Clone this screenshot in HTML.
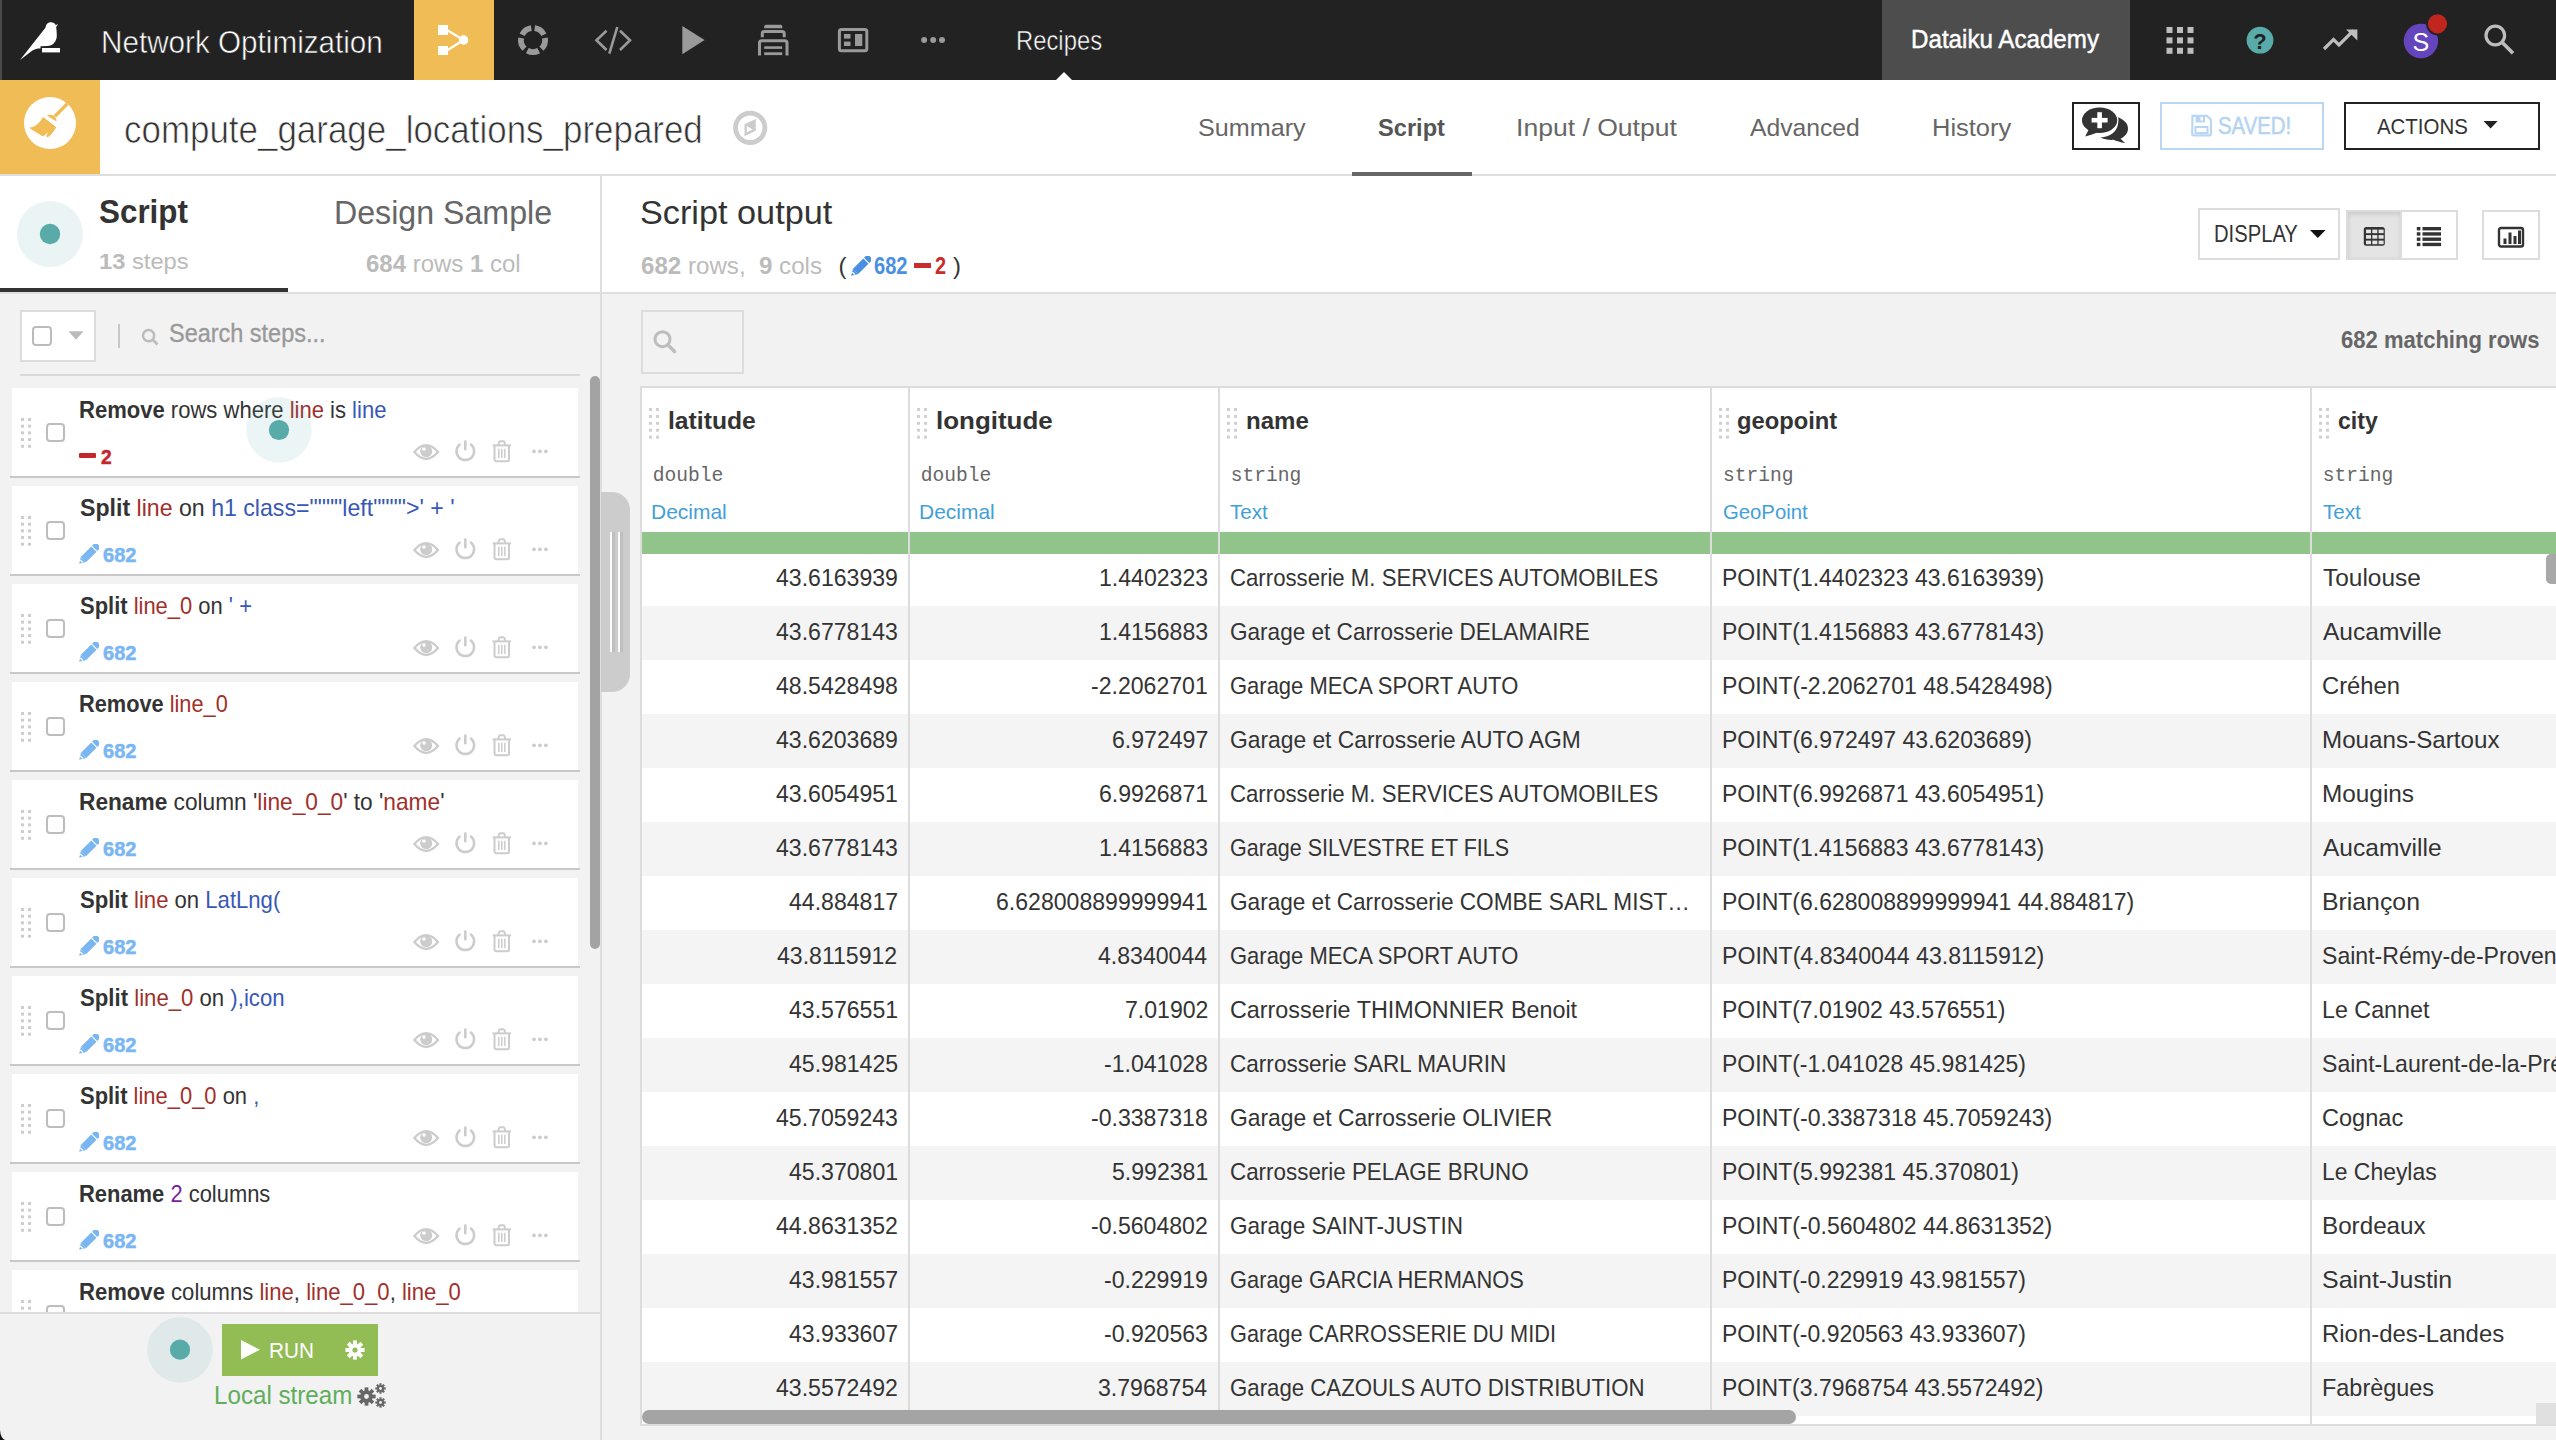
<!DOCTYPE html>
<html><head><meta charset="utf-8"><title>Dataiku</title><style>
html,body{margin:0;padding:0;width:2556px;height:1440px;overflow:hidden;background:#fff}
.m html,.m body{}
.r{position:absolute}
.t{position:absolute;line-height:1;white-space:nowrap}
.t b{font-weight:bold}
.rd{color:#a12f2b}
.bl{color:#3758b5}
.pu{color:#7a1fa0}
</style></head><body>
<div class="r" style="left:0.0px;top:0.0px;width:2556.0px;height:80.0px;background:#222222;"></div>
<div class="r" style="left:0.0px;top:0.0px;width:2.0px;height:80.0px;background:#4a4a4a;"></div>
<svg class="r" style="left:0.0px;top:0.0px;" width="80" height="80" viewBox="0 0 80 80"><path fill="#fff" d="M20,60 L45.6,27.5 C45.8,24 48.3,22.3 51,22.3 C53.3,22.3 54.8,23.4 55.7,24.9 L58.2,24.2 L56.1,26.9 C56.6,29.5 56.8,32.5 56.8,36 C56.5,42 52.5,46 47.3,46 L40.5,46.3 L40.5,48.4 C37,48.4 34.5,49 32.4,50.5 Z"/><rect x="42" y="48" width="18" height="4.4" fill="#fff"/></svg>
<div id="t0" class="t" style="left:101.11px;top:25.8px;font-family:'Liberation Sans', sans-serif;font-size:32.0px;color:#fff;font-weight:normal;transform:scaleX(0.9269);transform-origin:0 0;-webkit-text-stroke:0.6px #222;">Network Optimization</div>
<div class="r" style="left:414.0px;top:0.0px;width:80.0px;height:80.0px;background:#F0BC55;"></div>
<svg class="r" style="left:414.0px;top:0.0px;" width="80" height="80" viewBox="0 0 80 80"><rect x="24" y="25" width="10" height="10" fill="#fff"/><rect x="24" y="46" width="10" height="9" fill="#fff"/><path d="M33,30 L49.6,40 L33,50.5" stroke="#fff" stroke-width="2.2" fill="none"/><circle cx="49.6" cy="40" r="4.7" fill="#fff"/></svg>
<svg class="r" style="left:493.0px;top:0.0px;" width="80" height="80" viewBox="0 0 80 80"><path fill="#9a9a9a" d="M42.09,25.15 A15,15 0 0 1 53.48,33.42 L48.27,35.97 A9.2,9.2 0 0 0 41.28,30.89 Z"/><path fill="#9a9a9a" d="M54.77,37.40 A15,15 0 0 1 50.42,50.79 L46.39,46.62 A9.2,9.2 0 0 0 49.06,38.40 Z"/><path fill="#9a9a9a" d="M47.04,53.24 A15,15 0 0 1 32.96,53.24 L35.68,48.12 A9.2,9.2 0 0 0 44.32,48.12 Z"/><path fill="#9a9a9a" d="M29.58,50.79 A15,15 0 0 1 25.23,37.40 L30.94,38.40 A9.2,9.2 0 0 0 33.61,46.62 Z"/><path fill="#9a9a9a" d="M26.52,33.42 A15,15 0 0 1 37.91,25.15 L38.72,30.89 A9.2,9.2 0 0 0 31.73,35.97 Z"/></svg>
<svg class="r" style="left:573.0px;top:0.0px;" width="80" height="80" viewBox="0 0 80 80"><path d="M33.5,30.7 L23.5,40.3 L33.5,50" stroke="#9a9a9a" stroke-width="2.6" fill="none"/><path d="M47,30.7 L57,40.3 L47,50" stroke="#9a9a9a" stroke-width="2.6" fill="none"/><path d="M44.3,27 L36.3,53.7" stroke="#9a9a9a" stroke-width="2.6" fill="none"/></svg>
<svg class="r" style="left:653.0px;top:0.0px;" width="80" height="80" viewBox="0 0 80 80"><path d="M29.3,25.9 L29.3,54.2 L51.6,40 Z" fill="#9a9a9a"/></svg>
<svg class="r" style="left:733.0px;top:0.0px;" width="80" height="80" viewBox="0 0 80 80"><path d="M31.2,28.2 L31.2,26.5 Q31.2,24.7 33,24.7 L47.5,24.7 Q49.3,24.7 49.3,26.5 L49.3,28.2 Z" fill="#9a9a9a"/><path d="M29.3,37.2 L29.3,33.5 Q29.3,31.5 31.5,31.5 L49,31.5 Q51.2,31.5 51.2,33.5 L51.2,37.2" stroke="#9a9a9a" stroke-width="3" fill="none"/><path d="M26.5,55.4 L26.5,43 Q26.5,40.8 28.8,40.8 L51.8,40.8 Q54,40.8 54,43 L54,55.4" stroke="#9a9a9a" stroke-width="3" fill="none"/><rect x="31.2" y="46.3" width="18" height="2.6" fill="#9a9a9a"/><rect x="31.2" y="52.3" width="18" height="2.8" fill="#9a9a9a"/></svg>
<svg class="r" style="left:813.0px;top:0.0px;" width="80" height="80" viewBox="0 0 80 80"><rect x="26.4" y="29.4" width="27.4" height="21.3" rx="2" stroke="#9a9a9a" stroke-width="3" fill="none"/><rect x="31" y="34" width="6.5" height="4.6" fill="#9a9a9a"/><rect x="31" y="41.6" width="6.5" height="4.4" fill="#9a9a9a"/><rect x="42" y="34" width="7.3" height="12" fill="#9a9a9a"/></svg>
<svg class="r" style="left:893.0px;top:0.0px;" width="80" height="80" viewBox="0 0 80 80"><circle cx="31.1" cy="40" r="3" fill="#9a9a9a"/><circle cx="40.2" cy="40" r="3" fill="#9a9a9a"/><circle cx="49" cy="40" r="3" fill="#9a9a9a"/></svg>
<div id="t1" class="t" style="left:1016.13px;top:27.4px;font-family:'Liberation Sans', sans-serif;font-size:27.4px;color:#fff;font-weight:normal;transform:scaleX(0.8694);transform-origin:0 0;-webkit-text-stroke:0.5px #222;">Recipes</div>
<svg class="r" style="left:1054.0px;top:71.0px;" width="20" height="9" viewBox="0 0 20 9"><path d="M2,9 L10,1 L18,9 Z" fill="#fff"/></svg>
<div class="r" style="left:1882.0px;top:0.0px;width:248.0px;height:80.0px;background:#4d4d4d;"></div>
<div id="t2" class="t" style="left:1911.19px;top:26.0px;font-family:'Liberation Sans', sans-serif;font-size:26.7px;color:#fff;font-weight:normal;transform:scaleX(0.9053);transform-origin:0 0;-webkit-text-stroke:0.5px #fff;">Dataiku Academy</div>
<svg class="r" style="left:2140.0px;top:0.0px;" width="80" height="80" viewBox="0 0 80 80"><rect x="26.5" y="27.0" width="6" height="6" fill="#bdbdbd"/><rect x="37.0" y="27.0" width="6" height="6" fill="#bdbdbd"/><rect x="47.5" y="27.0" width="6" height="6" fill="#bdbdbd"/><rect x="26.5" y="37.4" width="6" height="6" fill="#bdbdbd"/><rect x="37.0" y="37.4" width="6" height="6" fill="#bdbdbd"/><rect x="47.5" y="37.4" width="6" height="6" fill="#bdbdbd"/><rect x="26.5" y="47.8" width="6" height="6" fill="#bdbdbd"/><rect x="37.0" y="47.8" width="6" height="6" fill="#bdbdbd"/><rect x="47.5" y="47.8" width="6" height="6" fill="#bdbdbd"/></svg>
<svg class="r" style="left:2220.0px;top:0.0px;" width="80" height="80" viewBox="0 0 80 80"><circle cx="40" cy="40.2" r="13.4" fill="#58ABA9"/><text x="40" y="48.5" text-anchor="middle" font-family="Liberation Sans" font-weight="bold" font-size="22" fill="#222">?</text></svg>
<svg class="r" style="left:2300.0px;top:0.0px;" width="80" height="80" viewBox="0 0 80 80"><path d="M24,49 L33.5,39.5 L39,45 L53.5,30.5" stroke="#bdbdbd" stroke-width="3.2" fill="none"/><path d="M46,29.5 L57.4,29.5 L57.4,40.5 Z" fill="#bdbdbd"/></svg>
<svg class="r" style="left:2380.0px;top:0.0px;" width="80" height="80" viewBox="0 0 80 80"><circle cx="40.9" cy="41" r="17.2" fill="#6445BE"/><text x="40.9" y="50.5" text-anchor="middle" font-family="Liberation Sans" font-size="25" fill="#fff">S</text><circle cx="57.5" cy="23.8" r="11.5" fill="#222"/><circle cx="57.5" cy="23.8" r="9.6" fill="#C0261E"/></svg>
<svg class="r" style="left:2460.0px;top:0.0px;" width="80" height="80" viewBox="0 0 80 80"><circle cx="35.3" cy="35.5" r="9.3" stroke="#bdbdbd" stroke-width="3.2" fill="none"/><path d="M41.8,42 L53,53.3" stroke="#bdbdbd" stroke-width="3.6" fill="none"/></svg>
<div class="r" style="left:0.0px;top:80.0px;width:2556.0px;height:94.0px;background:#ffffff;"></div>
<div class="r" style="left:0.0px;top:174.0px;width:2556.0px;height:2.0px;background:#dedede;"></div>
<div class="r" style="left:0.0px;top:80.0px;width:100.0px;height:94.0px;background:#F0BC55;"></div>
<svg class="r" style="left:0.0px;top:80.0px;" width="100" height="94" viewBox="0 0 100 94"><circle cx="50" cy="43" r="26" fill="#fff"/><g fill="#F0BC55"><path d="M66.2,22.5 L68.6,24.8 L56.2,37.4 L53.8,35 Z"/><path d="M46.8,35.5 C48.5,34.6 51.2,34.2 53.5,35.6 C55.3,36.8 56.2,38.4 56.6,40.8 L56.5,41.6 Z"/><path d="M43.2,37 L56.2,47.2 C54.8,50 52.4,53.5 47.7,57.5 L46.3,56.3 L47.6,52.6 L43.2,56.4 C39.6,54.8 34.5,51.5 29.2,47.8 C33.8,47.5 37.2,45 40,41.6 Z"/></g></svg>
<div id="t3" class="t" style="left:124.10px;top:110.0px;font-family:'Liberation Sans', sans-serif;font-size:39.0px;color:#333;font-weight:normal;transform:scaleX(0.8958);transform-origin:0 0;-webkit-text-stroke:0.7px #fff;">compute_garage_locations_prepared</div>
<svg class="r" style="left:730.0px;top:108.0px;" width="40" height="40" viewBox="0 0 40 40"><circle cx="20.2" cy="19.8" r="14.7" stroke="#cccccc" stroke-width="4.8" fill="none"/><path fill="#ccc" fill-rule="evenodd" d="M14.5,16.3 L25.8,11 L25.8,22.7 L14.5,28.2 Z M16.8,18 L22.7,21.4 L16.8,24.3 Z"/></svg>
<div id="t4" class="t" style="left:1197.58px;top:115.6px;font-family:'Liberation Sans', sans-serif;font-size:24.6px;color:#666;font-weight:normal;transform:scaleX(1.0229);transform-origin:0 0;">Summary</div>
<div id="t5" class="t" style="left:1377.61px;top:115.6px;font-family:'Liberation Sans', sans-serif;font-size:24.6px;color:#555;font-weight:bold;transform:scaleX(0.9600);transform-origin:0 0;">Script</div>
<div id="t6" class="t" style="left:1516.28px;top:115.6px;font-family:'Liberation Sans', sans-serif;font-size:24.6px;color:#666;font-weight:normal;transform:scaleX(1.0797);transform-origin:0 0;">Input / Output</div>
<div id="t7" class="t" style="left:1750.00px;top:115.6px;font-family:'Liberation Sans', sans-serif;font-size:24.6px;color:#666;font-weight:normal;transform:scaleX(1.0037);transform-origin:0 0;">Advanced</div>
<div id="t8" class="t" style="left:1931.55px;top:115.6px;font-family:'Liberation Sans', sans-serif;font-size:24.6px;color:#666;font-weight:normal;transform:scaleX(1.0355);transform-origin:0 0;">History</div>
<div class="r" style="left:1352.0px;top:172.0px;width:120.0px;height:4.0px;background:#666666;"></div>
<div class="r" style="left:2072.0px;top:102.0px;width:68.0px;height:48.0px;background:#fff;box-sizing:border-box;border:2px solid #222;"></div>
<svg class="r" style="left:2072.0px;top:102.0px;" width="68" height="48" viewBox="0 0 68 48"><path fill="#333" d="M43.5,14.5 C51,16.5 56,21 56,26.5 C56,31 53,34.5 48.5,36.8 L53,41 C48.5,40.5 44.5,39 41.5,37.8 C37.5,38.3 32,37.3 28.5,35.5 C38,35 45,29.5 46,22 C46.3,19.5 45.5,16.8 43.5,14.5 Z"/><ellipse cx="27.6" cy="18.2" rx="17.6" ry="12.8" fill="#333" stroke="#fff" stroke-width="2.6"/><ellipse cx="27.6" cy="18.2" rx="17.6" ry="12.8" fill="#333"/><path fill="#333" d="M17,27 L13.2,34.4 C18,33.4 22,31.8 25.5,30.2 Z"/><rect x="25.3" y="10.2" width="4.6" height="16" fill="#fff"/><rect x="19.6" y="15.9" width="16" height="4.6" fill="#fff"/></svg>
<div class="r" style="left:2160.0px;top:102.0px;width:163.5px;height:47.5px;background:#fff;box-sizing:border-box;border:2px solid #b9d7f3;"></div>
<svg class="r" style="left:2190.0px;top:114.0px;" width="24" height="24" viewBox="0 0 24 24"><path d="M2.5,1.8 L17,1.8 L21,5.8 L21,19.8 Q21,21.4 19.4,21.4 L3.8,21.4 Q2.2,21.4 2.2,19.8 Z" stroke="#b9d7f3" stroke-width="2.2" fill="none"/><rect x="5.5" y="2" width="9.5" height="6.5" fill="#b9d7f3"/><rect x="10.5" y="3" width="2.5" height="3.5" fill="#fff"/><rect x="5.5" y="13" width="12" height="6" stroke="#b9d7f3" stroke-width="2" fill="none"/></svg>
<div id="t9" class="t" style="left:2218.06px;top:114.6px;font-family:'Liberation Sans', sans-serif;font-size:23.2px;color:#b3d3f2;font-weight:normal;transform:scaleX(0.8790);transform-origin:0 0;-webkit-text-stroke:0.5px #b3d3f2;">SAVED!</div>
<div class="r" style="left:2343.5px;top:102.0px;width:196.0px;height:47.5px;background:#fff;box-sizing:border-box;border:2px solid #222;"></div>
<div id="t10" class="t" style="left:2376.95px;top:114.8px;font-family:'Liberation Sans', sans-serif;font-size:22.8px;color:#333;font-weight:normal;transform:scaleX(0.8960);transform-origin:0 0;">ACTIONS</div>
<svg class="r" style="left:2482.0px;top:118.0px;" width="18" height="12" viewBox="0 0 18 12"><path d="M1.5,3 L15.7,3 L8.6,10.5 Z" fill="#222"/></svg>
<div class="r" style="left:0.0px;top:176.0px;width:600.0px;height:116.0px;background:#fff;"></div>
<div class="r" style="left:0.0px;top:292.0px;width:600.0px;height:2.0px;background:#dedede;"></div>
<div class="r" style="left:0.0px;top:288.0px;width:288.0px;height:4.0px;background:#333333;"></div>
<div class="r" style="left:600.0px;top:176.0px;width:2.0px;height:1264.0px;background:#dedede;"></div>
<svg class="r" style="left:12.0px;top:196.0px;" width="76" height="76" viewBox="0 0 76 76"><circle cx="38" cy="38" r="33" fill="#eaf4f4"/><circle cx="38" cy="38" r="10.2" fill="#58ABA9"/></svg>
<div id="t11" class="t" style="left:98.83px;top:194.5px;font-family:'Liberation Sans', sans-serif;font-size:33.3px;color:#333;font-weight:bold;transform:scaleX(0.9426);transform-origin:0 0;">Script</div>
<div id="t12" class="t" style="left:98.97px;top:251.0px;font-family:'Liberation Sans', sans-serif;font-size:22.5px;color:#bbbbbb;font-weight:normal;transform:scaleX(1.0536);transform-origin:0 0;"><b>13</b> steps</div>
<div id="t13" class="t" style="left:334.28px;top:195.5px;font-family:'Liberation Sans', sans-serif;font-size:33.3px;color:#666;font-weight:normal;transform:scaleX(0.9658);transform-origin:0 0;">Design Sample</div>
<div id="t14" class="t" style="left:366.37px;top:253.0px;font-family:'Liberation Sans', sans-serif;font-size:23.0px;color:#bbbbbb;font-weight:normal;transform:scaleX(1.0429);transform-origin:0 0;"><b>684</b> rows <b>1</b> col</div>
<div class="r" style="left:0.0px;top:294.0px;width:600.0px;height:1146.0px;background:#f2f2f2;"></div>
<div class="r" style="left:20.0px;top:310.0px;width:75.5px;height:51.5px;background:#fff;box-sizing:border-box;border:2px solid #dcdcdc;"></div>
<div class="r" style="left:32.0px;top:326.0px;width:20.0px;height:19.5px;background:transparent;box-sizing:border-box;border:2px solid #bbb;border-radius:4px;"></div>
<svg class="r" style="left:66.0px;top:328.0px;" width="20" height="14" viewBox="0 0 20 14"><path d="M2.5,3.2 L17.5,3.2 L10,11.8 Z" fill="#bbb"/></svg>
<div class="r" style="left:117.5px;top:324.0px;width:2.0px;height:23.5px;background:#c8c8c8;"></div>
<svg class="r" style="left:138.0px;top:325.0px;" width="24" height="24" viewBox="0 0 24 24"><circle cx="10.6" cy="10.6" r="5.6" stroke="#bbb" stroke-width="2.4" fill="none"/><path d="M14.6,14.6 L19.5,19.5" stroke="#bbb" stroke-width="2.8"/></svg>
<div id="t15" class="t" style="left:169.08px;top:320.7px;font-family:'Liberation Sans', sans-serif;font-size:25.6px;color:#999999;font-weight:normal;transform:scaleX(0.9167);transform-origin:0 0;-webkit-text-stroke:0.35px #999;">Search steps...</div>
<div class="r" style="left:20.0px;top:374.0px;width:560.0px;height:2.0px;background:#d8d8d8;"></div>
<div class="r" style="left:0;top:376px;width:600px;height:936px;overflow:hidden">
<div class="r" style="left:12.0px;top:12.0px;width:566.0px;height:88.0px;background:#fff;"></div>
<div class="r" style="left:10.0px;top:100.0px;width:570.0px;height:2.0px;background:#c8c8c8;"></div>
<svg class="r" style="left:21.0px;top:41.6px;" width="10" height="30" viewBox="0 0 10 30"><rect x="0" y="0" width="3" height="3" fill="#cdcdcd"/><rect x="7" y="0" width="3" height="3" fill="#cdcdcd"/><rect x="0" y="6.68" width="3" height="3" fill="#cdcdcd"/><rect x="7" y="6.68" width="3" height="3" fill="#cdcdcd"/><rect x="0" y="13.36" width="3" height="3" fill="#cdcdcd"/><rect x="7" y="13.36" width="3" height="3" fill="#cdcdcd"/><rect x="0" y="20.04" width="3" height="3" fill="#cdcdcd"/><rect x="7" y="20.04" width="3" height="3" fill="#cdcdcd"/><rect x="0" y="26.72" width="3" height="3" fill="#cdcdcd"/><rect x="7" y="26.72" width="3" height="3" fill="#cdcdcd"/></svg>
<div class="r" style="left:46.0px;top:47.2px;width:18.6px;height:18.6px;background:transparent;box-sizing:border-box;border:2px solid #bdbdbd;border-radius:4px;"></div>
<div id="t16" class="t" style="left:79.05px;top:23.0px;font-family:'Liberation Sans', sans-serif;font-size:23.2px;color:#333;font-weight:normal;transform:scaleX(0.9503);transform-origin:0 0;"><b>Remove</b> rows where <span class="rd">line</span> is <span class="bl">line</span></div>
<div class="r" style="left:79.0px;top:77.1px;width:16.8px;height:4.8px;background:#c4262c;border-radius:1px;"></div>
<div id="t17" class="t" style="left:100.80px;top:70.9px;font-family:'Liberation Sans', sans-serif;font-size:20.9px;color:#c4262c;font-weight:bold;transform:scaleX(0.9182);transform-origin:0 0;-webkit-text-stroke:0.5px #c4262c;">2</div>
<svg class="r" style="left:410.0px;top:60.0px;" width="140" height="28" viewBox="0 0 140 28"><path d="M4.4,16.1 Q16.2,2.3 28,16.1 Q16.2,29.9 4.4,16.1 Z" stroke="#cccccc" stroke-width="2.3" fill="none"/><circle cx="16.2" cy="15.3" r="6" fill="#ccc"/><circle cx="14" cy="13" r="1.8" fill="#fff"/><path d="M49.64,8.56 A8.8,8.8 0 1 0 60.96,8.56" stroke="#ccc" stroke-width="2.5" fill="none" stroke-linecap="round"/><path d="M55.3,5.6 L55.3,13.2" stroke="#ccc" stroke-width="2.6" stroke-linecap="round"/><path d="M84.5,9.4 L84.5,23.8 Q84.5,25.2 86,25.2 L97.5,25.2 Q99,25.2 99,23.8 L99,9.4" stroke="#ccc" stroke-width="2" fill="none"/><path d="M82.6,9.4 L101,9.4" stroke="#ccc" stroke-width="2"/><path d="M88.2,9.4 L89,6.2 Q89.3,5.2 90.4,5.2 L93.2,5.2 Q94.2,5.2 94.5,6.2 L95.3,9.4" stroke="#ccc" stroke-width="2" fill="none"/><path d="M88.8,12.8 L88.8,22 M91.8,12.8 L91.8,22 M94.8,12.8 L94.8,22" stroke="#ccc" stroke-width="1.5"/><circle cx="124" cy="15.3" r="1.9" fill="#ccc"/><circle cx="129.9" cy="15.3" r="1.9" fill="#ccc"/><circle cx="135.9" cy="15.3" r="1.9" fill="#ccc"/></svg>
<div class="r" style="left:12.0px;top:110.0px;width:566.0px;height:88.0px;background:#fff;"></div>
<div class="r" style="left:10.0px;top:198.0px;width:570.0px;height:2.0px;background:#c8c8c8;"></div>
<svg class="r" style="left:21.0px;top:139.6px;" width="10" height="30" viewBox="0 0 10 30"><rect x="0" y="0" width="3" height="3" fill="#cdcdcd"/><rect x="7" y="0" width="3" height="3" fill="#cdcdcd"/><rect x="0" y="6.68" width="3" height="3" fill="#cdcdcd"/><rect x="7" y="6.68" width="3" height="3" fill="#cdcdcd"/><rect x="0" y="13.36" width="3" height="3" fill="#cdcdcd"/><rect x="7" y="13.36" width="3" height="3" fill="#cdcdcd"/><rect x="0" y="20.04" width="3" height="3" fill="#cdcdcd"/><rect x="7" y="20.04" width="3" height="3" fill="#cdcdcd"/><rect x="0" y="26.72" width="3" height="3" fill="#cdcdcd"/><rect x="7" y="26.72" width="3" height="3" fill="#cdcdcd"/></svg>
<div class="r" style="left:46.0px;top:145.2px;width:18.6px;height:18.6px;background:transparent;box-sizing:border-box;border:2px solid #bdbdbd;border-radius:4px;"></div>
<div id="t18" class="t" style="left:80.00px;top:121.0px;font-family:'Liberation Sans', sans-serif;font-size:23.2px;color:#333;font-weight:normal;transform:scaleX(0.9973);transform-origin:0 0;"><b>Split</b> <span class="rd">line</span> on <span class="bl">h1 class=""""left"""">' + '</span></div>
<svg class="r" style="left:78.0px;top:168.0px;" width="21" height="21" viewBox="0 0 21 21"><g transform="translate(1.2,19.8) rotate(-45)" fill="#7ab6f2"><path d="M0,0 L6.2,-3.7 L6.2,3.7 Z"/><rect x="6.2" y="-3.7" width="14.6" height="7.4"/><path d="M21.9,-3.7 L25.6,-3.7 Q27,-3.7 27,-2.3 L27,2.3 Q27,3.7 25.6,3.7 L21.9,3.7 Z"/></g><path d="M2.3,16 L4.8,18.5" stroke="#fff" stroke-width="1.2"/></svg>
<div id="t19" class="t" style="left:102.61px;top:168.6px;font-family:'Liberation Sans', sans-serif;font-size:20.9px;color:#7ab6f2;font-weight:bold;transform:scaleX(0.9600);transform-origin:0 0;-webkit-text-stroke:0.5px #7ab6f2;">682</div>
<svg class="r" style="left:410.0px;top:158.0px;" width="140" height="28" viewBox="0 0 140 28"><path d="M4.4,16.1 Q16.2,2.3 28,16.1 Q16.2,29.9 4.4,16.1 Z" stroke="#cccccc" stroke-width="2.3" fill="none"/><circle cx="16.2" cy="15.3" r="6" fill="#ccc"/><circle cx="14" cy="13" r="1.8" fill="#fff"/><path d="M49.64,8.56 A8.8,8.8 0 1 0 60.96,8.56" stroke="#ccc" stroke-width="2.5" fill="none" stroke-linecap="round"/><path d="M55.3,5.6 L55.3,13.2" stroke="#ccc" stroke-width="2.6" stroke-linecap="round"/><path d="M84.5,9.4 L84.5,23.8 Q84.5,25.2 86,25.2 L97.5,25.2 Q99,25.2 99,23.8 L99,9.4" stroke="#ccc" stroke-width="2" fill="none"/><path d="M82.6,9.4 L101,9.4" stroke="#ccc" stroke-width="2"/><path d="M88.2,9.4 L89,6.2 Q89.3,5.2 90.4,5.2 L93.2,5.2 Q94.2,5.2 94.5,6.2 L95.3,9.4" stroke="#ccc" stroke-width="2" fill="none"/><path d="M88.8,12.8 L88.8,22 M91.8,12.8 L91.8,22 M94.8,12.8 L94.8,22" stroke="#ccc" stroke-width="1.5"/><circle cx="124" cy="15.3" r="1.9" fill="#ccc"/><circle cx="129.9" cy="15.3" r="1.9" fill="#ccc"/><circle cx="135.9" cy="15.3" r="1.9" fill="#ccc"/></svg>
<div class="r" style="left:12.0px;top:208.0px;width:566.0px;height:88.0px;background:#fff;"></div>
<div class="r" style="left:10.0px;top:296.0px;width:570.0px;height:2.0px;background:#c8c8c8;"></div>
<svg class="r" style="left:21.0px;top:237.6px;" width="10" height="30" viewBox="0 0 10 30"><rect x="0" y="0" width="3" height="3" fill="#cdcdcd"/><rect x="7" y="0" width="3" height="3" fill="#cdcdcd"/><rect x="0" y="6.68" width="3" height="3" fill="#cdcdcd"/><rect x="7" y="6.68" width="3" height="3" fill="#cdcdcd"/><rect x="0" y="13.36" width="3" height="3" fill="#cdcdcd"/><rect x="7" y="13.36" width="3" height="3" fill="#cdcdcd"/><rect x="0" y="20.04" width="3" height="3" fill="#cdcdcd"/><rect x="7" y="20.04" width="3" height="3" fill="#cdcdcd"/><rect x="0" y="26.72" width="3" height="3" fill="#cdcdcd"/><rect x="7" y="26.72" width="3" height="3" fill="#cdcdcd"/></svg>
<div class="r" style="left:46.0px;top:243.2px;width:18.6px;height:18.6px;background:transparent;box-sizing:border-box;border:2px solid #bdbdbd;border-radius:4px;"></div>
<div id="t20" class="t" style="left:80.00px;top:219.0px;font-family:'Liberation Sans', sans-serif;font-size:23.2px;color:#333;font-weight:normal;transform:scaleX(0.9464);transform-origin:0 0;"><b>Split</b> <span class="rd">line_0</span> on <span class="bl">' +</span></div>
<svg class="r" style="left:78.0px;top:266.0px;" width="21" height="21" viewBox="0 0 21 21"><g transform="translate(1.2,19.8) rotate(-45)" fill="#7ab6f2"><path d="M0,0 L6.2,-3.7 L6.2,3.7 Z"/><rect x="6.2" y="-3.7" width="14.6" height="7.4"/><path d="M21.9,-3.7 L25.6,-3.7 Q27,-3.7 27,-2.3 L27,2.3 Q27,3.7 25.6,3.7 L21.9,3.7 Z"/></g><path d="M2.3,16 L4.8,18.5" stroke="#fff" stroke-width="1.2"/></svg>
<div id="t21" class="t" style="left:102.61px;top:266.6px;font-family:'Liberation Sans', sans-serif;font-size:20.9px;color:#7ab6f2;font-weight:bold;transform:scaleX(0.9600);transform-origin:0 0;-webkit-text-stroke:0.5px #7ab6f2;">682</div>
<svg class="r" style="left:410.0px;top:256.0px;" width="140" height="28" viewBox="0 0 140 28"><path d="M4.4,16.1 Q16.2,2.3 28,16.1 Q16.2,29.9 4.4,16.1 Z" stroke="#cccccc" stroke-width="2.3" fill="none"/><circle cx="16.2" cy="15.3" r="6" fill="#ccc"/><circle cx="14" cy="13" r="1.8" fill="#fff"/><path d="M49.64,8.56 A8.8,8.8 0 1 0 60.96,8.56" stroke="#ccc" stroke-width="2.5" fill="none" stroke-linecap="round"/><path d="M55.3,5.6 L55.3,13.2" stroke="#ccc" stroke-width="2.6" stroke-linecap="round"/><path d="M84.5,9.4 L84.5,23.8 Q84.5,25.2 86,25.2 L97.5,25.2 Q99,25.2 99,23.8 L99,9.4" stroke="#ccc" stroke-width="2" fill="none"/><path d="M82.6,9.4 L101,9.4" stroke="#ccc" stroke-width="2"/><path d="M88.2,9.4 L89,6.2 Q89.3,5.2 90.4,5.2 L93.2,5.2 Q94.2,5.2 94.5,6.2 L95.3,9.4" stroke="#ccc" stroke-width="2" fill="none"/><path d="M88.8,12.8 L88.8,22 M91.8,12.8 L91.8,22 M94.8,12.8 L94.8,22" stroke="#ccc" stroke-width="1.5"/><circle cx="124" cy="15.3" r="1.9" fill="#ccc"/><circle cx="129.9" cy="15.3" r="1.9" fill="#ccc"/><circle cx="135.9" cy="15.3" r="1.9" fill="#ccc"/></svg>
<div class="r" style="left:12.0px;top:306.0px;width:566.0px;height:88.0px;background:#fff;"></div>
<div class="r" style="left:10.0px;top:394.0px;width:570.0px;height:2.0px;background:#c8c8c8;"></div>
<svg class="r" style="left:21.0px;top:335.6px;" width="10" height="30" viewBox="0 0 10 30"><rect x="0" y="0" width="3" height="3" fill="#cdcdcd"/><rect x="7" y="0" width="3" height="3" fill="#cdcdcd"/><rect x="0" y="6.68" width="3" height="3" fill="#cdcdcd"/><rect x="7" y="6.68" width="3" height="3" fill="#cdcdcd"/><rect x="0" y="13.36" width="3" height="3" fill="#cdcdcd"/><rect x="7" y="13.36" width="3" height="3" fill="#cdcdcd"/><rect x="0" y="20.04" width="3" height="3" fill="#cdcdcd"/><rect x="7" y="20.04" width="3" height="3" fill="#cdcdcd"/><rect x="0" y="26.72" width="3" height="3" fill="#cdcdcd"/><rect x="7" y="26.72" width="3" height="3" fill="#cdcdcd"/></svg>
<div class="r" style="left:46.0px;top:341.2px;width:18.6px;height:18.6px;background:transparent;box-sizing:border-box;border:2px solid #bdbdbd;border-radius:4px;"></div>
<div id="t22" class="t" style="left:79.06px;top:317.0px;font-family:'Liberation Sans', sans-serif;font-size:23.2px;color:#333;font-weight:normal;transform:scaleX(0.9382);transform-origin:0 0;"><b>Remove</b> <span class="rd">line_0</span></div>
<svg class="r" style="left:78.0px;top:364.0px;" width="21" height="21" viewBox="0 0 21 21"><g transform="translate(1.2,19.8) rotate(-45)" fill="#7ab6f2"><path d="M0,0 L6.2,-3.7 L6.2,3.7 Z"/><rect x="6.2" y="-3.7" width="14.6" height="7.4"/><path d="M21.9,-3.7 L25.6,-3.7 Q27,-3.7 27,-2.3 L27,2.3 Q27,3.7 25.6,3.7 L21.9,3.7 Z"/></g><path d="M2.3,16 L4.8,18.5" stroke="#fff" stroke-width="1.2"/></svg>
<div id="t23" class="t" style="left:102.61px;top:364.6px;font-family:'Liberation Sans', sans-serif;font-size:20.9px;color:#7ab6f2;font-weight:bold;transform:scaleX(0.9600);transform-origin:0 0;-webkit-text-stroke:0.5px #7ab6f2;">682</div>
<svg class="r" style="left:410.0px;top:354.0px;" width="140" height="28" viewBox="0 0 140 28"><path d="M4.4,16.1 Q16.2,2.3 28,16.1 Q16.2,29.9 4.4,16.1 Z" stroke="#cccccc" stroke-width="2.3" fill="none"/><circle cx="16.2" cy="15.3" r="6" fill="#ccc"/><circle cx="14" cy="13" r="1.8" fill="#fff"/><path d="M49.64,8.56 A8.8,8.8 0 1 0 60.96,8.56" stroke="#ccc" stroke-width="2.5" fill="none" stroke-linecap="round"/><path d="M55.3,5.6 L55.3,13.2" stroke="#ccc" stroke-width="2.6" stroke-linecap="round"/><path d="M84.5,9.4 L84.5,23.8 Q84.5,25.2 86,25.2 L97.5,25.2 Q99,25.2 99,23.8 L99,9.4" stroke="#ccc" stroke-width="2" fill="none"/><path d="M82.6,9.4 L101,9.4" stroke="#ccc" stroke-width="2"/><path d="M88.2,9.4 L89,6.2 Q89.3,5.2 90.4,5.2 L93.2,5.2 Q94.2,5.2 94.5,6.2 L95.3,9.4" stroke="#ccc" stroke-width="2" fill="none"/><path d="M88.8,12.8 L88.8,22 M91.8,12.8 L91.8,22 M94.8,12.8 L94.8,22" stroke="#ccc" stroke-width="1.5"/><circle cx="124" cy="15.3" r="1.9" fill="#ccc"/><circle cx="129.9" cy="15.3" r="1.9" fill="#ccc"/><circle cx="135.9" cy="15.3" r="1.9" fill="#ccc"/></svg>
<div class="r" style="left:12.0px;top:404.0px;width:566.0px;height:88.0px;background:#fff;"></div>
<div class="r" style="left:10.0px;top:492.0px;width:570.0px;height:2.0px;background:#c8c8c8;"></div>
<svg class="r" style="left:21.0px;top:433.6px;" width="10" height="30" viewBox="0 0 10 30"><rect x="0" y="0" width="3" height="3" fill="#cdcdcd"/><rect x="7" y="0" width="3" height="3" fill="#cdcdcd"/><rect x="0" y="6.68" width="3" height="3" fill="#cdcdcd"/><rect x="7" y="6.68" width="3" height="3" fill="#cdcdcd"/><rect x="0" y="13.36" width="3" height="3" fill="#cdcdcd"/><rect x="7" y="13.36" width="3" height="3" fill="#cdcdcd"/><rect x="0" y="20.04" width="3" height="3" fill="#cdcdcd"/><rect x="7" y="20.04" width="3" height="3" fill="#cdcdcd"/><rect x="0" y="26.72" width="3" height="3" fill="#cdcdcd"/><rect x="7" y="26.72" width="3" height="3" fill="#cdcdcd"/></svg>
<div class="r" style="left:46.0px;top:439.2px;width:18.6px;height:18.6px;background:transparent;box-sizing:border-box;border:2px solid #bdbdbd;border-radius:4px;"></div>
<div id="t24" class="t" style="left:79.02px;top:415.0px;font-family:'Liberation Sans', sans-serif;font-size:23.2px;color:#333;font-weight:normal;transform:scaleX(0.9785);transform-origin:0 0;"><b>Rename</b> column '<span class="rd">line_0_0</span>' to '<span class="rd">name</span>'</div>
<svg class="r" style="left:78.0px;top:462.0px;" width="21" height="21" viewBox="0 0 21 21"><g transform="translate(1.2,19.8) rotate(-45)" fill="#7ab6f2"><path d="M0,0 L6.2,-3.7 L6.2,3.7 Z"/><rect x="6.2" y="-3.7" width="14.6" height="7.4"/><path d="M21.9,-3.7 L25.6,-3.7 Q27,-3.7 27,-2.3 L27,2.3 Q27,3.7 25.6,3.7 L21.9,3.7 Z"/></g><path d="M2.3,16 L4.8,18.5" stroke="#fff" stroke-width="1.2"/></svg>
<div id="t25" class="t" style="left:102.61px;top:462.6px;font-family:'Liberation Sans', sans-serif;font-size:20.9px;color:#7ab6f2;font-weight:bold;transform:scaleX(0.9600);transform-origin:0 0;-webkit-text-stroke:0.5px #7ab6f2;">682</div>
<svg class="r" style="left:410.0px;top:452.0px;" width="140" height="28" viewBox="0 0 140 28"><path d="M4.4,16.1 Q16.2,2.3 28,16.1 Q16.2,29.9 4.4,16.1 Z" stroke="#cccccc" stroke-width="2.3" fill="none"/><circle cx="16.2" cy="15.3" r="6" fill="#ccc"/><circle cx="14" cy="13" r="1.8" fill="#fff"/><path d="M49.64,8.56 A8.8,8.8 0 1 0 60.96,8.56" stroke="#ccc" stroke-width="2.5" fill="none" stroke-linecap="round"/><path d="M55.3,5.6 L55.3,13.2" stroke="#ccc" stroke-width="2.6" stroke-linecap="round"/><path d="M84.5,9.4 L84.5,23.8 Q84.5,25.2 86,25.2 L97.5,25.2 Q99,25.2 99,23.8 L99,9.4" stroke="#ccc" stroke-width="2" fill="none"/><path d="M82.6,9.4 L101,9.4" stroke="#ccc" stroke-width="2"/><path d="M88.2,9.4 L89,6.2 Q89.3,5.2 90.4,5.2 L93.2,5.2 Q94.2,5.2 94.5,6.2 L95.3,9.4" stroke="#ccc" stroke-width="2" fill="none"/><path d="M88.8,12.8 L88.8,22 M91.8,12.8 L91.8,22 M94.8,12.8 L94.8,22" stroke="#ccc" stroke-width="1.5"/><circle cx="124" cy="15.3" r="1.9" fill="#ccc"/><circle cx="129.9" cy="15.3" r="1.9" fill="#ccc"/><circle cx="135.9" cy="15.3" r="1.9" fill="#ccc"/></svg>
<div class="r" style="left:12.0px;top:502.0px;width:566.0px;height:88.0px;background:#fff;"></div>
<div class="r" style="left:10.0px;top:590.0px;width:570.0px;height:2.0px;background:#c8c8c8;"></div>
<svg class="r" style="left:21.0px;top:531.6px;" width="10" height="30" viewBox="0 0 10 30"><rect x="0" y="0" width="3" height="3" fill="#cdcdcd"/><rect x="7" y="0" width="3" height="3" fill="#cdcdcd"/><rect x="0" y="6.68" width="3" height="3" fill="#cdcdcd"/><rect x="7" y="6.68" width="3" height="3" fill="#cdcdcd"/><rect x="0" y="13.36" width="3" height="3" fill="#cdcdcd"/><rect x="7" y="13.36" width="3" height="3" fill="#cdcdcd"/><rect x="0" y="20.04" width="3" height="3" fill="#cdcdcd"/><rect x="7" y="20.04" width="3" height="3" fill="#cdcdcd"/><rect x="0" y="26.72" width="3" height="3" fill="#cdcdcd"/><rect x="7" y="26.72" width="3" height="3" fill="#cdcdcd"/></svg>
<div class="r" style="left:46.0px;top:537.2px;width:18.6px;height:18.6px;background:transparent;box-sizing:border-box;border:2px solid #bdbdbd;border-radius:4px;"></div>
<div id="t26" class="t" style="left:80.00px;top:513.0px;font-family:'Liberation Sans', sans-serif;font-size:23.2px;color:#333;font-weight:normal;transform:scaleX(0.9529);transform-origin:0 0;"><b>Split</b> <span class="rd">line</span> on <span class="bl">LatLng(</span></div>
<svg class="r" style="left:78.0px;top:560.0px;" width="21" height="21" viewBox="0 0 21 21"><g transform="translate(1.2,19.8) rotate(-45)" fill="#7ab6f2"><path d="M0,0 L6.2,-3.7 L6.2,3.7 Z"/><rect x="6.2" y="-3.7" width="14.6" height="7.4"/><path d="M21.9,-3.7 L25.6,-3.7 Q27,-3.7 27,-2.3 L27,2.3 Q27,3.7 25.6,3.7 L21.9,3.7 Z"/></g><path d="M2.3,16 L4.8,18.5" stroke="#fff" stroke-width="1.2"/></svg>
<div id="t27" class="t" style="left:102.61px;top:560.6px;font-family:'Liberation Sans', sans-serif;font-size:20.9px;color:#7ab6f2;font-weight:bold;transform:scaleX(0.9600);transform-origin:0 0;-webkit-text-stroke:0.5px #7ab6f2;">682</div>
<svg class="r" style="left:410.0px;top:550.0px;" width="140" height="28" viewBox="0 0 140 28"><path d="M4.4,16.1 Q16.2,2.3 28,16.1 Q16.2,29.9 4.4,16.1 Z" stroke="#cccccc" stroke-width="2.3" fill="none"/><circle cx="16.2" cy="15.3" r="6" fill="#ccc"/><circle cx="14" cy="13" r="1.8" fill="#fff"/><path d="M49.64,8.56 A8.8,8.8 0 1 0 60.96,8.56" stroke="#ccc" stroke-width="2.5" fill="none" stroke-linecap="round"/><path d="M55.3,5.6 L55.3,13.2" stroke="#ccc" stroke-width="2.6" stroke-linecap="round"/><path d="M84.5,9.4 L84.5,23.8 Q84.5,25.2 86,25.2 L97.5,25.2 Q99,25.2 99,23.8 L99,9.4" stroke="#ccc" stroke-width="2" fill="none"/><path d="M82.6,9.4 L101,9.4" stroke="#ccc" stroke-width="2"/><path d="M88.2,9.4 L89,6.2 Q89.3,5.2 90.4,5.2 L93.2,5.2 Q94.2,5.2 94.5,6.2 L95.3,9.4" stroke="#ccc" stroke-width="2" fill="none"/><path d="M88.8,12.8 L88.8,22 M91.8,12.8 L91.8,22 M94.8,12.8 L94.8,22" stroke="#ccc" stroke-width="1.5"/><circle cx="124" cy="15.3" r="1.9" fill="#ccc"/><circle cx="129.9" cy="15.3" r="1.9" fill="#ccc"/><circle cx="135.9" cy="15.3" r="1.9" fill="#ccc"/></svg>
<div class="r" style="left:12.0px;top:600.0px;width:566.0px;height:88.0px;background:#fff;"></div>
<div class="r" style="left:10.0px;top:688.0px;width:570.0px;height:2.0px;background:#c8c8c8;"></div>
<svg class="r" style="left:21.0px;top:629.6px;" width="10" height="30" viewBox="0 0 10 30"><rect x="0" y="0" width="3" height="3" fill="#cdcdcd"/><rect x="7" y="0" width="3" height="3" fill="#cdcdcd"/><rect x="0" y="6.68" width="3" height="3" fill="#cdcdcd"/><rect x="7" y="6.68" width="3" height="3" fill="#cdcdcd"/><rect x="0" y="13.36" width="3" height="3" fill="#cdcdcd"/><rect x="7" y="13.36" width="3" height="3" fill="#cdcdcd"/><rect x="0" y="20.04" width="3" height="3" fill="#cdcdcd"/><rect x="7" y="20.04" width="3" height="3" fill="#cdcdcd"/><rect x="0" y="26.72" width="3" height="3" fill="#cdcdcd"/><rect x="7" y="26.72" width="3" height="3" fill="#cdcdcd"/></svg>
<div class="r" style="left:46.0px;top:635.2px;width:18.6px;height:18.6px;background:transparent;box-sizing:border-box;border:2px solid #bdbdbd;border-radius:4px;"></div>
<div id="t28" class="t" style="left:80.00px;top:611.0px;font-family:'Liberation Sans', sans-serif;font-size:23.2px;color:#333;font-weight:normal;transform:scaleX(0.9559);transform-origin:0 0;"><b>Split</b> <span class="rd">line_0</span> on <span class="bl">),icon</span></div>
<svg class="r" style="left:78.0px;top:658.0px;" width="21" height="21" viewBox="0 0 21 21"><g transform="translate(1.2,19.8) rotate(-45)" fill="#7ab6f2"><path d="M0,0 L6.2,-3.7 L6.2,3.7 Z"/><rect x="6.2" y="-3.7" width="14.6" height="7.4"/><path d="M21.9,-3.7 L25.6,-3.7 Q27,-3.7 27,-2.3 L27,2.3 Q27,3.7 25.6,3.7 L21.9,3.7 Z"/></g><path d="M2.3,16 L4.8,18.5" stroke="#fff" stroke-width="1.2"/></svg>
<div id="t29" class="t" style="left:102.61px;top:658.6px;font-family:'Liberation Sans', sans-serif;font-size:20.9px;color:#7ab6f2;font-weight:bold;transform:scaleX(0.9600);transform-origin:0 0;-webkit-text-stroke:0.5px #7ab6f2;">682</div>
<svg class="r" style="left:410.0px;top:648.0px;" width="140" height="28" viewBox="0 0 140 28"><path d="M4.4,16.1 Q16.2,2.3 28,16.1 Q16.2,29.9 4.4,16.1 Z" stroke="#cccccc" stroke-width="2.3" fill="none"/><circle cx="16.2" cy="15.3" r="6" fill="#ccc"/><circle cx="14" cy="13" r="1.8" fill="#fff"/><path d="M49.64,8.56 A8.8,8.8 0 1 0 60.96,8.56" stroke="#ccc" stroke-width="2.5" fill="none" stroke-linecap="round"/><path d="M55.3,5.6 L55.3,13.2" stroke="#ccc" stroke-width="2.6" stroke-linecap="round"/><path d="M84.5,9.4 L84.5,23.8 Q84.5,25.2 86,25.2 L97.5,25.2 Q99,25.2 99,23.8 L99,9.4" stroke="#ccc" stroke-width="2" fill="none"/><path d="M82.6,9.4 L101,9.4" stroke="#ccc" stroke-width="2"/><path d="M88.2,9.4 L89,6.2 Q89.3,5.2 90.4,5.2 L93.2,5.2 Q94.2,5.2 94.5,6.2 L95.3,9.4" stroke="#ccc" stroke-width="2" fill="none"/><path d="M88.8,12.8 L88.8,22 M91.8,12.8 L91.8,22 M94.8,12.8 L94.8,22" stroke="#ccc" stroke-width="1.5"/><circle cx="124" cy="15.3" r="1.9" fill="#ccc"/><circle cx="129.9" cy="15.3" r="1.9" fill="#ccc"/><circle cx="135.9" cy="15.3" r="1.9" fill="#ccc"/></svg>
<div class="r" style="left:12.0px;top:698.0px;width:566.0px;height:88.0px;background:#fff;"></div>
<div class="r" style="left:10.0px;top:786.0px;width:570.0px;height:2.0px;background:#c8c8c8;"></div>
<svg class="r" style="left:21.0px;top:727.6px;" width="10" height="30" viewBox="0 0 10 30"><rect x="0" y="0" width="3" height="3" fill="#cdcdcd"/><rect x="7" y="0" width="3" height="3" fill="#cdcdcd"/><rect x="0" y="6.68" width="3" height="3" fill="#cdcdcd"/><rect x="7" y="6.68" width="3" height="3" fill="#cdcdcd"/><rect x="0" y="13.36" width="3" height="3" fill="#cdcdcd"/><rect x="7" y="13.36" width="3" height="3" fill="#cdcdcd"/><rect x="0" y="20.04" width="3" height="3" fill="#cdcdcd"/><rect x="7" y="20.04" width="3" height="3" fill="#cdcdcd"/><rect x="0" y="26.72" width="3" height="3" fill="#cdcdcd"/><rect x="7" y="26.72" width="3" height="3" fill="#cdcdcd"/></svg>
<div class="r" style="left:46.0px;top:733.2px;width:18.6px;height:18.6px;background:transparent;box-sizing:border-box;border:2px solid #bdbdbd;border-radius:4px;"></div>
<div id="t30" class="t" style="left:80.00px;top:709.0px;font-family:'Liberation Sans', sans-serif;font-size:23.2px;color:#333;font-weight:normal;transform:scaleX(0.9457);transform-origin:0 0;"><b>Split</b> <span class="rd">line_0_0</span> on <span class="bl">,</span></div>
<svg class="r" style="left:78.0px;top:756.0px;" width="21" height="21" viewBox="0 0 21 21"><g transform="translate(1.2,19.8) rotate(-45)" fill="#7ab6f2"><path d="M0,0 L6.2,-3.7 L6.2,3.7 Z"/><rect x="6.2" y="-3.7" width="14.6" height="7.4"/><path d="M21.9,-3.7 L25.6,-3.7 Q27,-3.7 27,-2.3 L27,2.3 Q27,3.7 25.6,3.7 L21.9,3.7 Z"/></g><path d="M2.3,16 L4.8,18.5" stroke="#fff" stroke-width="1.2"/></svg>
<div id="t31" class="t" style="left:102.61px;top:756.6px;font-family:'Liberation Sans', sans-serif;font-size:20.9px;color:#7ab6f2;font-weight:bold;transform:scaleX(0.9600);transform-origin:0 0;-webkit-text-stroke:0.5px #7ab6f2;">682</div>
<svg class="r" style="left:410.0px;top:746.0px;" width="140" height="28" viewBox="0 0 140 28"><path d="M4.4,16.1 Q16.2,2.3 28,16.1 Q16.2,29.9 4.4,16.1 Z" stroke="#cccccc" stroke-width="2.3" fill="none"/><circle cx="16.2" cy="15.3" r="6" fill="#ccc"/><circle cx="14" cy="13" r="1.8" fill="#fff"/><path d="M49.64,8.56 A8.8,8.8 0 1 0 60.96,8.56" stroke="#ccc" stroke-width="2.5" fill="none" stroke-linecap="round"/><path d="M55.3,5.6 L55.3,13.2" stroke="#ccc" stroke-width="2.6" stroke-linecap="round"/><path d="M84.5,9.4 L84.5,23.8 Q84.5,25.2 86,25.2 L97.5,25.2 Q99,25.2 99,23.8 L99,9.4" stroke="#ccc" stroke-width="2" fill="none"/><path d="M82.6,9.4 L101,9.4" stroke="#ccc" stroke-width="2"/><path d="M88.2,9.4 L89,6.2 Q89.3,5.2 90.4,5.2 L93.2,5.2 Q94.2,5.2 94.5,6.2 L95.3,9.4" stroke="#ccc" stroke-width="2" fill="none"/><path d="M88.8,12.8 L88.8,22 M91.8,12.8 L91.8,22 M94.8,12.8 L94.8,22" stroke="#ccc" stroke-width="1.5"/><circle cx="124" cy="15.3" r="1.9" fill="#ccc"/><circle cx="129.9" cy="15.3" r="1.9" fill="#ccc"/><circle cx="135.9" cy="15.3" r="1.9" fill="#ccc"/></svg>
<div class="r" style="left:12.0px;top:796.0px;width:566.0px;height:88.0px;background:#fff;"></div>
<div class="r" style="left:10.0px;top:884.0px;width:570.0px;height:2.0px;background:#c8c8c8;"></div>
<svg class="r" style="left:21.0px;top:825.6px;" width="10" height="30" viewBox="0 0 10 30"><rect x="0" y="0" width="3" height="3" fill="#cdcdcd"/><rect x="7" y="0" width="3" height="3" fill="#cdcdcd"/><rect x="0" y="6.68" width="3" height="3" fill="#cdcdcd"/><rect x="7" y="6.68" width="3" height="3" fill="#cdcdcd"/><rect x="0" y="13.36" width="3" height="3" fill="#cdcdcd"/><rect x="7" y="13.36" width="3" height="3" fill="#cdcdcd"/><rect x="0" y="20.04" width="3" height="3" fill="#cdcdcd"/><rect x="7" y="20.04" width="3" height="3" fill="#cdcdcd"/><rect x="0" y="26.72" width="3" height="3" fill="#cdcdcd"/><rect x="7" y="26.72" width="3" height="3" fill="#cdcdcd"/></svg>
<div class="r" style="left:46.0px;top:831.2px;width:18.6px;height:18.6px;background:transparent;box-sizing:border-box;border:2px solid #bdbdbd;border-radius:4px;"></div>
<div id="t32" class="t" style="left:79.05px;top:807.0px;font-family:'Liberation Sans', sans-serif;font-size:23.2px;color:#333;font-weight:normal;transform:scaleX(0.9453);transform-origin:0 0;"><b>Rename</b> <span class="pu">2</span> columns</div>
<svg class="r" style="left:78.0px;top:854.0px;" width="21" height="21" viewBox="0 0 21 21"><g transform="translate(1.2,19.8) rotate(-45)" fill="#7ab6f2"><path d="M0,0 L6.2,-3.7 L6.2,3.7 Z"/><rect x="6.2" y="-3.7" width="14.6" height="7.4"/><path d="M21.9,-3.7 L25.6,-3.7 Q27,-3.7 27,-2.3 L27,2.3 Q27,3.7 25.6,3.7 L21.9,3.7 Z"/></g><path d="M2.3,16 L4.8,18.5" stroke="#fff" stroke-width="1.2"/></svg>
<div id="t33" class="t" style="left:102.61px;top:854.6px;font-family:'Liberation Sans', sans-serif;font-size:20.9px;color:#7ab6f2;font-weight:bold;transform:scaleX(0.9600);transform-origin:0 0;-webkit-text-stroke:0.5px #7ab6f2;">682</div>
<svg class="r" style="left:410.0px;top:844.0px;" width="140" height="28" viewBox="0 0 140 28"><path d="M4.4,16.1 Q16.2,2.3 28,16.1 Q16.2,29.9 4.4,16.1 Z" stroke="#cccccc" stroke-width="2.3" fill="none"/><circle cx="16.2" cy="15.3" r="6" fill="#ccc"/><circle cx="14" cy="13" r="1.8" fill="#fff"/><path d="M49.64,8.56 A8.8,8.8 0 1 0 60.96,8.56" stroke="#ccc" stroke-width="2.5" fill="none" stroke-linecap="round"/><path d="M55.3,5.6 L55.3,13.2" stroke="#ccc" stroke-width="2.6" stroke-linecap="round"/><path d="M84.5,9.4 L84.5,23.8 Q84.5,25.2 86,25.2 L97.5,25.2 Q99,25.2 99,23.8 L99,9.4" stroke="#ccc" stroke-width="2" fill="none"/><path d="M82.6,9.4 L101,9.4" stroke="#ccc" stroke-width="2"/><path d="M88.2,9.4 L89,6.2 Q89.3,5.2 90.4,5.2 L93.2,5.2 Q94.2,5.2 94.5,6.2 L95.3,9.4" stroke="#ccc" stroke-width="2" fill="none"/><path d="M88.8,12.8 L88.8,22 M91.8,12.8 L91.8,22 M94.8,12.8 L94.8,22" stroke="#ccc" stroke-width="1.5"/><circle cx="124" cy="15.3" r="1.9" fill="#ccc"/><circle cx="129.9" cy="15.3" r="1.9" fill="#ccc"/><circle cx="135.9" cy="15.3" r="1.9" fill="#ccc"/></svg>
<div class="r" style="left:12.0px;top:894.0px;width:566.0px;height:88.0px;background:#fff;"></div>
<div class="r" style="left:10.0px;top:982.0px;width:570.0px;height:2.0px;background:#c8c8c8;"></div>
<svg class="r" style="left:21.0px;top:923.6px;" width="10" height="30" viewBox="0 0 10 30"><rect x="0" y="0" width="3" height="3" fill="#cdcdcd"/><rect x="7" y="0" width="3" height="3" fill="#cdcdcd"/><rect x="0" y="6.68" width="3" height="3" fill="#cdcdcd"/><rect x="7" y="6.68" width="3" height="3" fill="#cdcdcd"/><rect x="0" y="13.36" width="3" height="3" fill="#cdcdcd"/><rect x="7" y="13.36" width="3" height="3" fill="#cdcdcd"/><rect x="0" y="20.04" width="3" height="3" fill="#cdcdcd"/><rect x="7" y="20.04" width="3" height="3" fill="#cdcdcd"/><rect x="0" y="26.72" width="3" height="3" fill="#cdcdcd"/><rect x="7" y="26.72" width="3" height="3" fill="#cdcdcd"/></svg>
<div class="r" style="left:46.0px;top:929.2px;width:18.6px;height:18.6px;background:transparent;box-sizing:border-box;border:2px solid #bdbdbd;border-radius:4px;"></div>
<div id="t34" class="t" style="left:79.05px;top:905.0px;font-family:'Liberation Sans', sans-serif;font-size:23.2px;color:#333;font-weight:normal;transform:scaleX(0.9525);transform-origin:0 0;"><b>Remove</b> columns <span class="rd">line</span>, <span class="rd">line_0_0</span>, <span class="rd">line_0</span></div>
<svg class="r" style="left:78.0px;top:952.0px;" width="21" height="21" viewBox="0 0 21 21"><g transform="translate(1.2,19.8) rotate(-45)" fill="#7ab6f2"><path d="M0,0 L6.2,-3.7 L6.2,3.7 Z"/><rect x="6.2" y="-3.7" width="14.6" height="7.4"/><path d="M21.9,-3.7 L25.6,-3.7 Q27,-3.7 27,-2.3 L27,2.3 Q27,3.7 25.6,3.7 L21.9,3.7 Z"/></g><path d="M2.3,16 L4.8,18.5" stroke="#fff" stroke-width="1.2"/></svg>
<div id="t35" class="t" style="left:102.61px;top:952.6px;font-family:'Liberation Sans', sans-serif;font-size:20.9px;color:#7ab6f2;font-weight:bold;transform:scaleX(0.9600);transform-origin:0 0;-webkit-text-stroke:0.5px #7ab6f2;">682</div>
<svg class="r" style="left:410.0px;top:942.0px;" width="140" height="28" viewBox="0 0 140 28"><path d="M4.4,16.1 Q16.2,2.3 28,16.1 Q16.2,29.9 4.4,16.1 Z" stroke="#cccccc" stroke-width="2.3" fill="none"/><circle cx="16.2" cy="15.3" r="6" fill="#ccc"/><circle cx="14" cy="13" r="1.8" fill="#fff"/><path d="M49.64,8.56 A8.8,8.8 0 1 0 60.96,8.56" stroke="#ccc" stroke-width="2.5" fill="none" stroke-linecap="round"/><path d="M55.3,5.6 L55.3,13.2" stroke="#ccc" stroke-width="2.6" stroke-linecap="round"/><path d="M84.5,9.4 L84.5,23.8 Q84.5,25.2 86,25.2 L97.5,25.2 Q99,25.2 99,23.8 L99,9.4" stroke="#ccc" stroke-width="2" fill="none"/><path d="M82.6,9.4 L101,9.4" stroke="#ccc" stroke-width="2"/><path d="M88.2,9.4 L89,6.2 Q89.3,5.2 90.4,5.2 L93.2,5.2 Q94.2,5.2 94.5,6.2 L95.3,9.4" stroke="#ccc" stroke-width="2" fill="none"/><path d="M88.8,12.8 L88.8,22 M91.8,12.8 L91.8,22 M94.8,12.8 L94.8,22" stroke="#ccc" stroke-width="1.5"/><circle cx="124" cy="15.3" r="1.9" fill="#ccc"/><circle cx="129.9" cy="15.3" r="1.9" fill="#ccc"/><circle cx="135.9" cy="15.3" r="1.9" fill="#ccc"/></svg>
</div>
<div class="r" style="left:0.0px;top:1312.0px;width:600.0px;height:2.0px;background:#dcdcdc;"></div>
<div class="r" style="left:590.0px;top:376.0px;width:10.0px;height:573.0px;background:#a3a3a3;border-radius:5px;"></div>
<svg class="r" style="left:246.0px;top:397.0px;" width="66" height="66" viewBox="0 0 66 66"><circle cx="33" cy="33" r="32.7" fill="#58ABA9" fill-opacity="0.12"/><circle cx="33" cy="33" r="10.1" fill="#58ABA9"/></svg>
<svg class="r" style="left:146.0px;top:1316.0px;" width="68" height="68" viewBox="0 0 68 68"><circle cx="34" cy="34" r="32.7" fill="#58ABA9" fill-opacity="0.12"/><circle cx="34" cy="33.7" r="10.1" fill="#58ABA9"/></svg>
<div class="r" style="left:222.0px;top:1324.0px;width:155.6px;height:51.7px;background:#92BD55;"></div>
<svg class="r" style="left:236.0px;top:1335.0px;" width="30" height="30" viewBox="0 0 30 30"><path d="M5,5 L5,24.4 L24,14.7 Z" fill="#fff"/></svg>
<div id="t36" class="t" style="left:269.04px;top:1339.8px;font-family:'Liberation Sans', sans-serif;font-size:21.7px;color:#fff;font-weight:normal;transform:scaleX(0.9556);transform-origin:0 0;">RUN</div>
<svg class="r" style="left:342.0px;top:1337.0px;" width="26" height="26" viewBox="0 0 26 26"><g transform="translate(13,13)"><circle r="6.3" fill="#fff"/><circle r="2.6" fill="#92BD55"/><rect x="-2" y="-9.6" width="4" height="5" fill="#fff" transform="rotate(0)"/><rect x="-2" y="-9.6" width="4" height="5" fill="#fff" transform="rotate(45)"/><rect x="-2" y="-9.6" width="4" height="5" fill="#fff" transform="rotate(90)"/><rect x="-2" y="-9.6" width="4" height="5" fill="#fff" transform="rotate(135)"/><rect x="-2" y="-9.6" width="4" height="5" fill="#fff" transform="rotate(180)"/><rect x="-2" y="-9.6" width="4" height="5" fill="#fff" transform="rotate(225)"/><rect x="-2" y="-9.6" width="4" height="5" fill="#fff" transform="rotate(270)"/><rect x="-2" y="-9.6" width="4" height="5" fill="#fff" transform="rotate(315)"/></g></svg>
<div id="t37" class="t" style="left:214.11px;top:1383.3px;font-family:'Liberation Sans', sans-serif;font-size:25.6px;color:#5fae5b;font-weight:normal;transform:scaleX(0.9441);transform-origin:0 0;">Local stream</div>
<svg class="r" style="left:354.0px;top:1380.0px;" width="36" height="30" viewBox="0 0 36 30"><g transform="translate(12.5,16.5)"><circle r="6.3" fill="#666"/><circle r="2.4" fill="#f2f2f2"/><rect x="-1.89" y="-9.135" width="3.78" height="3.78" fill="#666" transform="rotate(0)"/><rect x="-1.89" y="-9.135" width="3.78" height="3.78" fill="#666" transform="rotate(45)"/><rect x="-1.89" y="-9.135" width="3.78" height="3.78" fill="#666" transform="rotate(90)"/><rect x="-1.89" y="-9.135" width="3.78" height="3.78" fill="#666" transform="rotate(135)"/><rect x="-1.89" y="-9.135" width="3.78" height="3.78" fill="#666" transform="rotate(180)"/><rect x="-1.89" y="-9.135" width="3.78" height="3.78" fill="#666" transform="rotate(225)"/><rect x="-1.89" y="-9.135" width="3.78" height="3.78" fill="#666" transform="rotate(270)"/><rect x="-1.89" y="-9.135" width="3.78" height="3.78" fill="#666" transform="rotate(315)"/></g><g transform="translate(26.5,8.5)"><circle r="3.6" fill="#666"/><circle r="1.4" fill="#f2f2f2"/><rect x="-1.08" y="-5.22" width="2.16" height="2.16" fill="#666" transform="rotate(0)"/><rect x="-1.08" y="-5.22" width="2.16" height="2.16" fill="#666" transform="rotate(45)"/><rect x="-1.08" y="-5.22" width="2.16" height="2.16" fill="#666" transform="rotate(90)"/><rect x="-1.08" y="-5.22" width="2.16" height="2.16" fill="#666" transform="rotate(135)"/><rect x="-1.08" y="-5.22" width="2.16" height="2.16" fill="#666" transform="rotate(180)"/><rect x="-1.08" y="-5.22" width="2.16" height="2.16" fill="#666" transform="rotate(225)"/><rect x="-1.08" y="-5.22" width="2.16" height="2.16" fill="#666" transform="rotate(270)"/><rect x="-1.08" y="-5.22" width="2.16" height="2.16" fill="#666" transform="rotate(315)"/></g><g transform="translate(26.5,22.5)"><circle r="3.6" fill="#666"/><circle r="1.4" fill="#f2f2f2"/><rect x="-1.08" y="-5.22" width="2.16" height="2.16" fill="#666" transform="rotate(0)"/><rect x="-1.08" y="-5.22" width="2.16" height="2.16" fill="#666" transform="rotate(45)"/><rect x="-1.08" y="-5.22" width="2.16" height="2.16" fill="#666" transform="rotate(90)"/><rect x="-1.08" y="-5.22" width="2.16" height="2.16" fill="#666" transform="rotate(135)"/><rect x="-1.08" y="-5.22" width="2.16" height="2.16" fill="#666" transform="rotate(180)"/><rect x="-1.08" y="-5.22" width="2.16" height="2.16" fill="#666" transform="rotate(225)"/><rect x="-1.08" y="-5.22" width="2.16" height="2.16" fill="#666" transform="rotate(270)"/><rect x="-1.08" y="-5.22" width="2.16" height="2.16" fill="#666" transform="rotate(315)"/></g></svg>
<div class="r" style="left:601.0px;top:492.0px;width:29.0px;height:200.0px;background:#cccccc;border-radius:0 18px 18px 0;"></div>
<div class="r" style="left:610.2px;top:532.0px;width:2.0px;height:120.0px;background:#fff;"></div>
<div class="r" style="left:612.2px;top:532.0px;width:2.5px;height:120.0px;background:#bdbdbd;"></div>
<div class="r" style="left:618.0px;top:532.0px;width:2.0px;height:120.0px;background:#fff;"></div>
<div class="r" style="left:620.0px;top:532.0px;width:2.5px;height:120.0px;background:#bdbdbd;"></div>
<div class="r" style="left:602.0px;top:176.0px;width:1954.0px;height:116.0px;background:#fff;"></div>
<div class="r" style="left:602.0px;top:292.0px;width:1954.0px;height:2.0px;background:#dedede;"></div>
<div class="r" style="left:602.0px;top:294.0px;width:1954.0px;height:1146.0px;background:#f2f2f2;"></div>
<div class="r" style="left:601px;top:492px;width:29px;height:200px;background:#cccccc;border-radius:0 18px 18px 0"></div>
<div class="r" style="left:610.2px;top:532.0px;width:2.0px;height:120.0px;background:#fafafa;"></div>
<div class="r" style="left:612.2px;top:532.0px;width:3.0px;height:120.0px;background:#bfbfbf;"></div>
<div class="r" style="left:618.0px;top:532.0px;width:2.0px;height:120.0px;background:#fafafa;"></div>
<div class="r" style="left:620.0px;top:532.0px;width:2.5px;height:120.0px;background:#bfbfbf;"></div>
<div id="t38" class="t" style="left:639.99px;top:195.7px;font-family:'Liberation Sans', sans-serif;font-size:33.9px;color:#333;font-weight:normal;transform:scaleX(1.0105);transform-origin:0 0;">Script output</div>
<div id="t39" class="t" style="left:641.00px;top:254.3px;font-family:'Liberation Sans', sans-serif;font-size:23.8px;color:#bbbbbb;font-weight:normal;transform:scaleX(1.0135);transform-origin:0 0;"><b>682</b> rows, &nbsp;<b>9</b> cols</div>
<div id="t40" class="t" style="left:838.6px;top:254.3px;font-family:'Liberation Sans', sans-serif;font-size:23.8px;color:#333;font-weight:normal;">(</div>
<svg class="r" style="left:849.5px;top:255.5px;" width="21" height="21" viewBox="0 0 21 21"><g transform="translate(1.2,19.8) rotate(-45)" fill="#4a90e2"><path d="M0,0 L6.2,-3.7 L6.2,3.7 Z"/><rect x="6.2" y="-3.7" width="14.6" height="7.4"/><path d="M21.9,-3.7 L25.6,-3.7 Q27,-3.7 27,-2.3 L27,2.3 Q27,3.7 25.6,3.7 L21.9,3.7 Z"/></g><path d="M2.3,16 L4.8,18.5" stroke="#fff" stroke-width="1.2"/></svg>
<div id="t41" class="t" style="left:874.26px;top:254.3px;font-family:'Liberation Sans', sans-serif;font-size:23.8px;color:#4a90e2;font-weight:normal;transform:scaleX(0.8436);transform-origin:0 0;"><b>682</b></div>
<div class="r" style="left:913.8px;top:262.5px;width:17.4px;height:5.4px;background:#cc2b2b;"></div>
<div id="t42" class="t" style="left:935.44px;top:254.3px;font-family:'Liberation Sans', sans-serif;font-size:23.8px;color:#cc2b2b;font-weight:normal;transform:scaleX(0.8385);transform-origin:0 0;"><b>2</b></div>
<div id="t43" class="t" style="left:953.0px;top:254.3px;font-family:'Liberation Sans', sans-serif;font-size:23.8px;color:#333;font-weight:normal;">)</div>
<div class="r" style="left:2198.0px;top:208.2px;width:142.0px;height:51.5px;background:#fff;box-sizing:border-box;border:2px solid #dcdcdc;"></div>
<div id="t44" class="t" style="left:2213.82px;top:223.0px;font-family:'Liberation Sans', sans-serif;font-size:23.2px;color:#333;font-weight:normal;transform:scaleX(0.8713);transform-origin:0 0;">DISPLAY</div>
<svg class="r" style="left:2305.0px;top:225.0px;" width="26" height="18" viewBox="0 0 26 18"><path d="M5,5 L20.6,5 L12.8,13 Z" fill="#111"/></svg>
<div class="r" style="left:2346.0px;top:210.0px;width:55.0px;height:49.5px;background:#e4e4e4;box-shadow: inset 0 2px 5px rgba(0,0,0,0.12);box-sizing:border-box;border:2px solid #dcdcdc;border-right:none;"></div>
<div class="r" style="left:2400.0px;top:210.0px;width:57.6px;height:49.5px;background:#fff;box-sizing:border-box;border:2px solid #dcdcdc;"></div>
<svg class="r" style="left:2360.0px;top:225.0px;" width="28" height="24" viewBox="0 0 28 24"><rect x="3.8" y="2" width="21" height="18.7" rx="2.5" fill="#333"/><rect x="6" y="4.6" width="5" height="3.6" fill="#e4e4e4"/><rect x="12.3" y="4.6" width="5" height="3.6" fill="#e4e4e4"/><rect x="18.6" y="4.6" width="5" height="3.6" fill="#e4e4e4"/><rect x="6" y="10.1" width="5" height="3.6" fill="#e4e4e4"/><rect x="12.3" y="10.1" width="5" height="3.6" fill="#e4e4e4"/><rect x="18.6" y="10.1" width="5" height="3.6" fill="#e4e4e4"/><rect x="6" y="15.6" width="5" height="3.6" fill="#e4e4e4"/><rect x="12.3" y="15.6" width="5" height="3.6" fill="#e4e4e4"/><rect x="18.6" y="15.6" width="5" height="3.6" fill="#e4e4e4"/></svg>
<svg class="r" style="left:2414.0px;top:225.0px;" width="30" height="24" viewBox="0 0 30 24"><rect x="2.8" y="2" width="3.6" height="3.4" fill="#333"/><rect x="8.5" y="2" width="18.5" height="3.4" fill="#333"/><rect x="2.8" y="7.25" width="3.6" height="3.4" fill="#333"/><rect x="8.5" y="7.25" width="18.5" height="3.4" fill="#333"/><rect x="2.8" y="12.5" width="3.6" height="3.4" fill="#333"/><rect x="8.5" y="12.5" width="18.5" height="3.4" fill="#333"/><rect x="2.8" y="17.75" width="3.6" height="3.4" fill="#333"/><rect x="8.5" y="17.75" width="18.5" height="3.4" fill="#333"/></svg>
<div class="r" style="left:2482.3px;top:210.0px;width:57.4px;height:49.5px;background:#fff;box-sizing:border-box;border:2px solid #dcdcdc;"></div>
<svg class="r" style="left:2496.0px;top:225.0px;" width="30" height="24" viewBox="0 0 30 24"><rect x="3" y="3" width="24" height="18.5" rx="2" stroke="#333" stroke-width="2.4" fill="none"/><rect x="7.5" y="13.5" width="3" height="5.5" fill="#333"/><rect x="12.5" y="7.5" width="3" height="11.5" fill="#333"/><rect x="17.5" y="11" width="3" height="8" fill="#333"/><rect x="22" y="5.5" width="3" height="13.5" fill="#333"/></svg>
<div class="r" style="left:640.5px;top:310.0px;width:103.5px;height:63.7px;background:transparent;box-sizing:border-box;border:2px solid #dcdcdc;"></div>
<svg class="r" style="left:648.0px;top:326.0px;" width="32" height="32" viewBox="0 0 32 32"><circle cx="14.5" cy="13.2" r="7.5" stroke="#bdbdbd" stroke-width="3" fill="none"/><path d="M19.8,18.6 L26.5,25.5" stroke="#bdbdbd" stroke-width="3.4" stroke-linecap="round"/></svg>
<div id="t45" class="t" style="left:2341.21px;top:329.2px;font-family:'Liberation Sans', sans-serif;font-size:23.2px;color:#666;font-weight:normal;transform:scaleX(0.9510);transform-origin:0 0;"><b>682 matching rows</b></div>
<div class="r" style="left:640.0px;top:386.0px;width:1916.0px;height:1040.0px;background:#fff;box-sizing:border-box;border:2px solid #dcdcdc;border-right:none;"></div>
<div class="r" style="left:642px;top:388px;width:1914px;height:1036px;overflow:hidden">
<div class="r" style="left:0.0px;top:218.0px;width:1914.0px;height:54.0px;background:#f4f4f4;"></div>
<div class="r" style="left:0.0px;top:326.0px;width:1914.0px;height:54.0px;background:#f4f4f4;"></div>
<div class="r" style="left:0.0px;top:434.0px;width:1914.0px;height:54.0px;background:#f4f4f4;"></div>
<div class="r" style="left:0.0px;top:542.0px;width:1914.0px;height:54.0px;background:#f4f4f4;"></div>
<div class="r" style="left:0.0px;top:650.0px;width:1914.0px;height:54.0px;background:#f4f4f4;"></div>
<div class="r" style="left:0.0px;top:758.0px;width:1914.0px;height:54.0px;background:#f4f4f4;"></div>
<div class="r" style="left:0.0px;top:866.0px;width:1914.0px;height:54.0px;background:#f4f4f4;"></div>
<div class="r" style="left:0.0px;top:974.0px;width:1914.0px;height:54.0px;background:#f4f4f4;"></div>
<div class="r" style="left:0.0px;top:144.0px;width:1914.0px;height:22.0px;background:#91C48B;"></div>
<svg class="r" style="left:7.0px;top:19.5px;" width="10" height="31" viewBox="0 0 10 31"><rect x="0" y="0" width="3" height="3" fill="#d0d0d0"/><rect x="7" y="0" width="3" height="3" fill="#d0d0d0"/><rect x="0" y="6.9" width="3" height="3" fill="#d0d0d0"/><rect x="7" y="6.9" width="3" height="3" fill="#d0d0d0"/><rect x="0" y="13.8" width="3" height="3" fill="#d0d0d0"/><rect x="7" y="13.8" width="3" height="3" fill="#d0d0d0"/><rect x="0" y="20.7" width="3" height="3" fill="#d0d0d0"/><rect x="7" y="20.7" width="3" height="3" fill="#d0d0d0"/><rect x="0" y="27.6" width="3" height="3" fill="#d0d0d0"/><rect x="7" y="27.6" width="3" height="3" fill="#d0d0d0"/></svg>
<div class="r" style="left:266.0px;top:0.0px;width:2.0px;height:1036.0px;background:#dcdcdc;"></div>
<svg class="r" style="left:275.0px;top:19.5px;" width="10" height="31" viewBox="0 0 10 31"><rect x="0" y="0" width="3" height="3" fill="#d0d0d0"/><rect x="7" y="0" width="3" height="3" fill="#d0d0d0"/><rect x="0" y="6.9" width="3" height="3" fill="#d0d0d0"/><rect x="7" y="6.9" width="3" height="3" fill="#d0d0d0"/><rect x="0" y="13.8" width="3" height="3" fill="#d0d0d0"/><rect x="7" y="13.8" width="3" height="3" fill="#d0d0d0"/><rect x="0" y="20.7" width="3" height="3" fill="#d0d0d0"/><rect x="7" y="20.7" width="3" height="3" fill="#d0d0d0"/><rect x="0" y="27.6" width="3" height="3" fill="#d0d0d0"/><rect x="7" y="27.6" width="3" height="3" fill="#d0d0d0"/></svg>
<div class="r" style="left:576.0px;top:0.0px;width:2.0px;height:1036.0px;background:#dcdcdc;"></div>
<svg class="r" style="left:585.0px;top:19.5px;" width="10" height="31" viewBox="0 0 10 31"><rect x="0" y="0" width="3" height="3" fill="#d0d0d0"/><rect x="7" y="0" width="3" height="3" fill="#d0d0d0"/><rect x="0" y="6.9" width="3" height="3" fill="#d0d0d0"/><rect x="7" y="6.9" width="3" height="3" fill="#d0d0d0"/><rect x="0" y="13.8" width="3" height="3" fill="#d0d0d0"/><rect x="7" y="13.8" width="3" height="3" fill="#d0d0d0"/><rect x="0" y="20.7" width="3" height="3" fill="#d0d0d0"/><rect x="7" y="20.7" width="3" height="3" fill="#d0d0d0"/><rect x="0" y="27.6" width="3" height="3" fill="#d0d0d0"/><rect x="7" y="27.6" width="3" height="3" fill="#d0d0d0"/></svg>
<div class="r" style="left:1068.0px;top:0.0px;width:2.0px;height:1036.0px;background:#dcdcdc;"></div>
<svg class="r" style="left:1077.0px;top:19.5px;" width="10" height="31" viewBox="0 0 10 31"><rect x="0" y="0" width="3" height="3" fill="#d0d0d0"/><rect x="7" y="0" width="3" height="3" fill="#d0d0d0"/><rect x="0" y="6.9" width="3" height="3" fill="#d0d0d0"/><rect x="7" y="6.9" width="3" height="3" fill="#d0d0d0"/><rect x="0" y="13.8" width="3" height="3" fill="#d0d0d0"/><rect x="7" y="13.8" width="3" height="3" fill="#d0d0d0"/><rect x="0" y="20.7" width="3" height="3" fill="#d0d0d0"/><rect x="7" y="20.7" width="3" height="3" fill="#d0d0d0"/><rect x="0" y="27.6" width="3" height="3" fill="#d0d0d0"/><rect x="7" y="27.6" width="3" height="3" fill="#d0d0d0"/></svg>
<div class="r" style="left:1668.0px;top:0.0px;width:2.0px;height:1036.0px;background:#dcdcdc;"></div>
<svg class="r" style="left:1677.0px;top:19.5px;" width="10" height="31" viewBox="0 0 10 31"><rect x="0" y="0" width="3" height="3" fill="#d0d0d0"/><rect x="7" y="0" width="3" height="3" fill="#d0d0d0"/><rect x="0" y="6.9" width="3" height="3" fill="#d0d0d0"/><rect x="7" y="6.9" width="3" height="3" fill="#d0d0d0"/><rect x="0" y="13.8" width="3" height="3" fill="#d0d0d0"/><rect x="7" y="13.8" width="3" height="3" fill="#d0d0d0"/><rect x="0" y="20.7" width="3" height="3" fill="#d0d0d0"/><rect x="7" y="20.7" width="3" height="3" fill="#d0d0d0"/><rect x="0" y="27.6" width="3" height="3" fill="#d0d0d0"/><rect x="7" y="27.6" width="3" height="3" fill="#d0d0d0"/></svg>
</div>
<div id="t46" class="t" style="left:667.60px;top:409.0px;font-family:'Liberation Sans', sans-serif;font-size:24.8px;color:#333;font-weight:normal;transform:scaleX(0.9954);transform-origin:0 0;"><b>latitude</b></div>
<div id="t47" class="t" style="left:935.95px;top:409.0px;font-family:'Liberation Sans', sans-serif;font-size:24.8px;color:#333;font-weight:normal;transform:scaleX(1.0455);transform-origin:0 0;"><b>longitude</b></div>
<div id="t48" class="t" style="left:1246.03px;top:409.0px;font-family:'Liberation Sans', sans-serif;font-size:24.8px;color:#333;font-weight:normal;transform:scaleX(0.9688);transform-origin:0 0;"><b>name</b></div>
<div id="t49" class="t" style="left:1737.42px;top:409.0px;font-family:'Liberation Sans', sans-serif;font-size:24.8px;color:#333;font-weight:normal;transform:scaleX(0.9567);transform-origin:0 0;"><b>geopoint</b></div>
<div id="t50" class="t" style="left:2338.00px;top:409.0px;font-family:'Liberation Sans', sans-serif;font-size:24.8px;color:#333;font-weight:normal;transform:scaleX(0.9302);transform-origin:0 0;"><b>city</b></div>
<div id="t51" class="t" style="left:652.7px;top:467.0px;font-family:'Liberation Mono', monospace;font-size:19.6px;color:#666;font-weight:normal;">double</div>
<div id="t52" class="t" style="left:920.7px;top:467.0px;font-family:'Liberation Mono', monospace;font-size:19.6px;color:#666;font-weight:normal;">double</div>
<div id="t53" class="t" style="left:1230.7px;top:467.0px;font-family:'Liberation Mono', monospace;font-size:19.6px;color:#666;font-weight:normal;">string</div>
<div id="t54" class="t" style="left:1723.0px;top:467.0px;font-family:'Liberation Mono', monospace;font-size:19.6px;color:#666;font-weight:normal;">string</div>
<div id="t55" class="t" style="left:2322.8px;top:467.0px;font-family:'Liberation Mono', monospace;font-size:19.6px;color:#666;font-weight:normal;">string</div>
<div id="t56" class="t" style="left:651.38px;top:502.1px;font-family:'Liberation Sans', sans-serif;font-size:20.9px;color:#42a0d8;font-weight:normal;transform:scaleX(1.0041);transform-origin:0 0;">Decimal</div>
<div id="t57" class="t" style="left:919.38px;top:502.1px;font-family:'Liberation Sans', sans-serif;font-size:20.9px;color:#42a0d8;font-weight:normal;transform:scaleX(1.0041);transform-origin:0 0;">Decimal</div>
<div id="t58" class="t" style="left:1230.39px;top:502.1px;font-family:'Liberation Sans', sans-serif;font-size:20.9px;color:#42a0d8;font-weight:normal;transform:scaleX(0.9868);transform-origin:0 0;">Text</div>
<div id="t59" class="t" style="left:1723.00px;top:502.1px;font-family:'Liberation Sans', sans-serif;font-size:20.9px;color:#42a0d8;font-weight:normal;transform:scaleX(0.9713);transform-origin:0 0;">GeoPoint</div>
<div id="t60" class="t" style="left:2322.60px;top:502.1px;font-family:'Liberation Sans', sans-serif;font-size:20.9px;color:#42a0d8;font-weight:normal;transform:scaleX(0.9868);transform-origin:0 0;">Text</div>
<div id="t61" class="t" style="left:775.69px;top:565.6px;font-family:'Liberation Sans', sans-serif;font-size:24.6px;color:#333;font-weight:normal;transform:scaleX(0.9382);transform-origin:0 0;">43.6163939</div>
<div id="t62" class="t" style="left:1098.86px;top:565.6px;font-family:'Liberation Sans', sans-serif;font-size:24.6px;color:#333;font-weight:normal;transform:scaleX(0.9382);transform-origin:0 0;">1.4402323</div>
<div id="t63" class="t" style="left:1230.10px;top:565.6px;font-family:'Liberation Sans', sans-serif;font-size:24.6px;color:#333;font-weight:normal;transform:scaleX(0.9023);transform-origin:0 0;">Carrosserie M. SERVICES AUTOMOBILES</div>
<div id="t64" class="t" style="left:1722.25px;top:565.6px;font-family:'Liberation Sans', sans-serif;font-size:24.6px;color:#333;font-weight:normal;transform:scaleX(0.9348);transform-origin:0 0;">POINT(1.4402323 43.6163939)</div>
<div id="t65" class="t" style="left:2322.79px;top:565.6px;font-family:'Liberation Sans', sans-serif;font-size:24.6px;color:#333;font-weight:normal;transform:scaleX(0.9939);transform-origin:0 0;">Toulouse</div>
<div id="t66" class="t" style="left:775.69px;top:619.6px;font-family:'Liberation Sans', sans-serif;font-size:24.6px;color:#333;font-weight:normal;transform:scaleX(0.9382);transform-origin:0 0;">43.6778143</div>
<div id="t67" class="t" style="left:1098.86px;top:619.6px;font-family:'Liberation Sans', sans-serif;font-size:24.6px;color:#333;font-weight:normal;transform:scaleX(0.9382);transform-origin:0 0;">1.4156883</div>
<div id="t68" class="t" style="left:1230.08px;top:619.6px;font-family:'Liberation Sans', sans-serif;font-size:24.6px;color:#333;font-weight:normal;transform:scaleX(0.9174);transform-origin:0 0;">Garage et Carrosserie DELAMAIRE</div>
<div id="t69" class="t" style="left:1722.25px;top:619.6px;font-family:'Liberation Sans', sans-serif;font-size:24.6px;color:#333;font-weight:normal;transform:scaleX(0.9348);transform-origin:0 0;">POINT(1.4156883 43.6778143)</div>
<div id="t70" class="t" style="left:2322.79px;top:619.6px;font-family:'Liberation Sans', sans-serif;font-size:24.6px;color:#333;font-weight:normal;transform:scaleX(0.9975);transform-origin:0 0;">Aucamville</div>
<div id="t71" class="t" style="left:775.69px;top:673.6px;font-family:'Liberation Sans', sans-serif;font-size:24.6px;color:#333;font-weight:normal;transform:scaleX(0.9382);transform-origin:0 0;">48.5428498</div>
<div id="t72" class="t" style="left:1091.18px;top:673.6px;font-family:'Liberation Sans', sans-serif;font-size:24.6px;color:#333;font-weight:normal;transform:scaleX(0.9382);transform-origin:0 0;">-2.2062701</div>
<div id="t73" class="t" style="left:1230.11px;top:673.6px;font-family:'Liberation Sans', sans-serif;font-size:24.6px;color:#333;font-weight:normal;transform:scaleX(0.8935);transform-origin:0 0;">Garage MECA SPORT AUTO</div>
<div id="t74" class="t" style="left:1722.25px;top:673.6px;font-family:'Liberation Sans', sans-serif;font-size:24.6px;color:#333;font-weight:normal;transform:scaleX(0.9376);transform-origin:0 0;">POINT(-2.2062701 48.5428498)</div>
<div id="t75" class="t" style="left:2321.83px;top:673.6px;font-family:'Liberation Sans', sans-serif;font-size:24.6px;color:#333;font-weight:normal;transform:scaleX(0.9679);transform-origin:0 0;">Créhen</div>
<div id="t76" class="t" style="left:775.69px;top:727.6px;font-family:'Liberation Sans', sans-serif;font-size:24.6px;color:#333;font-weight:normal;transform:scaleX(0.9382);transform-origin:0 0;">43.6203689</div>
<div id="t77" class="t" style="left:1111.70px;top:727.6px;font-family:'Liberation Sans', sans-serif;font-size:24.6px;color:#333;font-weight:normal;transform:scaleX(0.9382);transform-origin:0 0;">6.972497</div>
<div id="t78" class="t" style="left:1230.07px;top:727.6px;font-family:'Liberation Sans', sans-serif;font-size:24.6px;color:#333;font-weight:normal;transform:scaleX(0.9274);transform-origin:0 0;">Garage et Carrosserie AUTO AGM</div>
<div id="t79" class="t" style="left:1722.25px;top:727.6px;font-family:'Liberation Sans', sans-serif;font-size:24.6px;color:#333;font-weight:normal;transform:scaleX(0.9366);transform-origin:0 0;">POINT(6.972497 43.6203689)</div>
<div id="t80" class="t" style="left:2321.81px;top:727.6px;font-family:'Liberation Sans', sans-serif;font-size:24.6px;color:#333;font-weight:normal;transform:scaleX(0.9838);transform-origin:0 0;">Mouans-Sartoux</div>
<div id="t81" class="t" style="left:775.69px;top:781.6px;font-family:'Liberation Sans', sans-serif;font-size:24.6px;color:#333;font-weight:normal;transform:scaleX(0.9382);transform-origin:0 0;">43.6054951</div>
<div id="t82" class="t" style="left:1098.86px;top:781.6px;font-family:'Liberation Sans', sans-serif;font-size:24.6px;color:#333;font-weight:normal;transform:scaleX(0.9382);transform-origin:0 0;">6.9926871</div>
<div id="t83" class="t" style="left:1230.10px;top:781.6px;font-family:'Liberation Sans', sans-serif;font-size:24.6px;color:#333;font-weight:normal;transform:scaleX(0.9023);transform-origin:0 0;">Carrosserie M. SERVICES AUTOMOBILES</div>
<div id="t84" class="t" style="left:1722.25px;top:781.6px;font-family:'Liberation Sans', sans-serif;font-size:24.6px;color:#333;font-weight:normal;transform:scaleX(0.9348);transform-origin:0 0;">POINT(6.9926871 43.6054951)</div>
<div id="t85" class="t" style="left:2321.80px;top:781.6px;font-family:'Liberation Sans', sans-serif;font-size:24.6px;color:#333;font-weight:normal;transform:scaleX(0.9901);transform-origin:0 0;">Mougins</div>
<div id="t86" class="t" style="left:775.69px;top:835.6px;font-family:'Liberation Sans', sans-serif;font-size:24.6px;color:#333;font-weight:normal;transform:scaleX(0.9382);transform-origin:0 0;">43.6778143</div>
<div id="t87" class="t" style="left:1098.86px;top:835.6px;font-family:'Liberation Sans', sans-serif;font-size:24.6px;color:#333;font-weight:normal;transform:scaleX(0.9382);transform-origin:0 0;">1.4156883</div>
<div id="t88" class="t" style="left:1230.12px;top:835.6px;font-family:'Liberation Sans', sans-serif;font-size:24.6px;color:#333;font-weight:normal;transform:scaleX(0.8751);transform-origin:0 0;">Garage SILVESTRE ET FILS</div>
<div id="t89" class="t" style="left:1722.25px;top:835.6px;font-family:'Liberation Sans', sans-serif;font-size:24.6px;color:#333;font-weight:normal;transform:scaleX(0.9348);transform-origin:0 0;">POINT(1.4156883 43.6778143)</div>
<div id="t90" class="t" style="left:2322.79px;top:835.6px;font-family:'Liberation Sans', sans-serif;font-size:24.6px;color:#333;font-weight:normal;transform:scaleX(0.9975);transform-origin:0 0;">Aucamville</div>
<div id="t91" class="t" style="left:788.52px;top:889.6px;font-family:'Liberation Sans', sans-serif;font-size:24.6px;color:#333;font-weight:normal;transform:scaleX(0.9382);transform-origin:0 0;">44.884817</div>
<div id="t92" class="t" style="left:996.21px;top:889.6px;font-family:'Liberation Sans', sans-serif;font-size:24.6px;color:#333;font-weight:normal;transform:scaleX(0.9382);transform-origin:0 0;">6.628008899999941</div>
<div id="t93" class="t" style="left:1230.08px;top:889.6px;font-family:'Liberation Sans', sans-serif;font-size:24.6px;color:#333;font-weight:normal;transform:scaleX(0.9185);transform-origin:0 0;">Garage et Carrosserie COMBE SARL MIST…</div>
<div id="t94" class="t" style="left:1722.25px;top:889.6px;font-family:'Liberation Sans', sans-serif;font-size:24.6px;color:#333;font-weight:normal;transform:scaleX(0.9360);transform-origin:0 0;">POINT(6.628008899999941 44.884817)</div>
<div id="t95" class="t" style="left:2321.78px;top:889.6px;font-family:'Liberation Sans', sans-serif;font-size:24.6px;color:#333;font-weight:normal;transform:scaleX(1.0089);transform-origin:0 0;">Briançon</div>
<div id="t96" class="t" style="left:777.41px;top:943.6px;font-family:'Liberation Sans', sans-serif;font-size:24.6px;color:#333;font-weight:normal;transform:scaleX(0.9382);transform-origin:0 0;">43.8115912</div>
<div id="t97" class="t" style="left:1097.92px;top:943.6px;font-family:'Liberation Sans', sans-serif;font-size:24.6px;color:#333;font-weight:normal;transform:scaleX(0.9382);transform-origin:0 0;">4.8340044</div>
<div id="t98" class="t" style="left:1230.11px;top:943.6px;font-family:'Liberation Sans', sans-serif;font-size:24.6px;color:#333;font-weight:normal;transform:scaleX(0.8935);transform-origin:0 0;">Garage MECA SPORT AUTO</div>
<div id="t99" class="t" style="left:1722.25px;top:943.6px;font-family:'Liberation Sans', sans-serif;font-size:24.6px;color:#333;font-weight:normal;transform:scaleX(0.9403);transform-origin:0 0;">POINT(4.8340044 43.8115912)</div>
<div id="t100" class="t" style="left:2321.86px;top:943.6px;font-family:'Liberation Sans', sans-serif;font-size:24.6px;color:#333;font-weight:normal;transform:scaleX(0.9382);transform-origin:0 0;">Saint-Rémy-de-Provence</div>
<div id="t101" class="t" style="left:788.52px;top:997.6px;font-family:'Liberation Sans', sans-serif;font-size:24.6px;color:#333;font-weight:normal;transform:scaleX(0.9382);transform-origin:0 0;">43.576551</div>
<div id="t102" class="t" style="left:1124.53px;top:997.6px;font-family:'Liberation Sans', sans-serif;font-size:24.6px;color:#333;font-weight:normal;transform:scaleX(0.9382);transform-origin:0 0;">7.01902</div>
<div id="t103" class="t" style="left:1230.05px;top:997.6px;font-family:'Liberation Sans', sans-serif;font-size:24.6px;color:#333;font-weight:normal;transform:scaleX(0.9488);transform-origin:0 0;">Carrosserie THIMONNIER Benoit</div>
<div id="t104" class="t" style="left:1722.25px;top:997.6px;font-family:'Liberation Sans', sans-serif;font-size:24.6px;color:#333;font-weight:normal;transform:scaleX(0.9341);transform-origin:0 0;">POINT(7.01902 43.576551)</div>
<div id="t105" class="t" style="left:2321.85px;top:997.6px;font-family:'Liberation Sans', sans-serif;font-size:24.6px;color:#333;font-weight:normal;transform:scaleX(0.9460);transform-origin:0 0;">Le Cannet</div>
<div id="t106" class="t" style="left:788.52px;top:1051.6px;font-family:'Liberation Sans', sans-serif;font-size:24.6px;color:#333;font-weight:normal;transform:scaleX(0.9382);transform-origin:0 0;">45.981425</div>
<div id="t107" class="t" style="left:1104.01px;top:1051.6px;font-family:'Liberation Sans', sans-serif;font-size:24.6px;color:#333;font-weight:normal;transform:scaleX(0.9382);transform-origin:0 0;">-1.041028</div>
<div id="t108" class="t" style="left:1230.08px;top:1051.6px;font-family:'Liberation Sans', sans-serif;font-size:24.6px;color:#333;font-weight:normal;transform:scaleX(0.9177);transform-origin:0 0;">Carrosserie SARL MAURIN</div>
<div id="t109" class="t" style="left:1722.25px;top:1051.6px;font-family:'Liberation Sans', sans-serif;font-size:24.6px;color:#333;font-weight:normal;transform:scaleX(0.9340);transform-origin:0 0;">POINT(-1.041028 45.981425)</div>
<div id="t110" class="t" style="left:2321.86px;top:1051.6px;font-family:'Liberation Sans', sans-serif;font-size:24.6px;color:#333;font-weight:normal;transform:scaleX(0.9382);transform-origin:0 0;">Saint-Laurent-de-la-Prée</div>
<div id="t111" class="t" style="left:775.69px;top:1105.6px;font-family:'Liberation Sans', sans-serif;font-size:24.6px;color:#333;font-weight:normal;transform:scaleX(0.9382);transform-origin:0 0;">45.7059243</div>
<div id="t112" class="t" style="left:1091.18px;top:1105.6px;font-family:'Liberation Sans', sans-serif;font-size:24.6px;color:#333;font-weight:normal;transform:scaleX(0.9382);transform-origin:0 0;">-0.3387318</div>
<div id="t113" class="t" style="left:1230.07px;top:1105.6px;font-family:'Liberation Sans', sans-serif;font-size:24.6px;color:#333;font-weight:normal;transform:scaleX(0.9284);transform-origin:0 0;">Garage et Carrosserie OLIVIER</div>
<div id="t114" class="t" style="left:1722.25px;top:1105.6px;font-family:'Liberation Sans', sans-serif;font-size:24.6px;color:#333;font-weight:normal;transform:scaleX(0.9362);transform-origin:0 0;">POINT(-0.3387318 45.7059243)</div>
<div id="t115" class="t" style="left:2321.84px;top:1105.6px;font-family:'Liberation Sans', sans-serif;font-size:24.6px;color:#333;font-weight:normal;transform:scaleX(0.9578);transform-origin:0 0;">Cognac</div>
<div id="t116" class="t" style="left:788.52px;top:1159.6px;font-family:'Liberation Sans', sans-serif;font-size:24.6px;color:#333;font-weight:normal;transform:scaleX(0.9382);transform-origin:0 0;">45.370801</div>
<div id="t117" class="t" style="left:1111.70px;top:1159.6px;font-family:'Liberation Sans', sans-serif;font-size:24.6px;color:#333;font-weight:normal;transform:scaleX(0.9382);transform-origin:0 0;">5.992381</div>
<div id="t118" class="t" style="left:1230.09px;top:1159.6px;font-family:'Liberation Sans', sans-serif;font-size:24.6px;color:#333;font-weight:normal;transform:scaleX(0.9104);transform-origin:0 0;">Carrosserie PELAGE BRUNO</div>
<div id="t119" class="t" style="left:1722.25px;top:1159.6px;font-family:'Liberation Sans', sans-serif;font-size:24.6px;color:#333;font-weight:normal;transform:scaleX(0.9362);transform-origin:0 0;">POINT(5.992381 45.370801)</div>
<div id="t120" class="t" style="left:2321.87px;top:1159.6px;font-family:'Liberation Sans', sans-serif;font-size:24.6px;color:#333;font-weight:normal;transform:scaleX(0.9320);transform-origin:0 0;">Le Cheylas</div>
<div id="t121" class="t" style="left:775.69px;top:1213.6px;font-family:'Liberation Sans', sans-serif;font-size:24.6px;color:#333;font-weight:normal;transform:scaleX(0.9382);transform-origin:0 0;">44.8631352</div>
<div id="t122" class="t" style="left:1091.18px;top:1213.6px;font-family:'Liberation Sans', sans-serif;font-size:24.6px;color:#333;font-weight:normal;transform:scaleX(0.9382);transform-origin:0 0;">-0.5604802</div>
<div id="t123" class="t" style="left:1230.08px;top:1213.6px;font-family:'Liberation Sans', sans-serif;font-size:24.6px;color:#333;font-weight:normal;transform:scaleX(0.9167);transform-origin:0 0;">Garage SAINT-JUSTIN</div>
<div id="t124" class="t" style="left:1722.25px;top:1213.6px;font-family:'Liberation Sans', sans-serif;font-size:24.6px;color:#333;font-weight:normal;transform:scaleX(0.9362);transform-origin:0 0;">POINT(-0.5604802 44.8631352)</div>
<div id="t125" class="t" style="left:2321.81px;top:1213.6px;font-family:'Liberation Sans', sans-serif;font-size:24.6px;color:#333;font-weight:normal;transform:scaleX(0.9846);transform-origin:0 0;">Bordeaux</div>
<div id="t126" class="t" style="left:788.52px;top:1267.6px;font-family:'Liberation Sans', sans-serif;font-size:24.6px;color:#333;font-weight:normal;transform:scaleX(0.9382);transform-origin:0 0;">43.981557</div>
<div id="t127" class="t" style="left:1104.01px;top:1267.6px;font-family:'Liberation Sans', sans-serif;font-size:24.6px;color:#333;font-weight:normal;transform:scaleX(0.9382);transform-origin:0 0;">-0.229919</div>
<div id="t128" class="t" style="left:1230.11px;top:1267.6px;font-family:'Liberation Sans', sans-serif;font-size:24.6px;color:#333;font-weight:normal;transform:scaleX(0.8881);transform-origin:0 0;">Garage GARCIA HERMANOS</div>
<div id="t129" class="t" style="left:1722.25px;top:1267.6px;font-family:'Liberation Sans', sans-serif;font-size:24.6px;color:#333;font-weight:normal;transform:scaleX(0.9340);transform-origin:0 0;">POINT(-0.229919 43.981557)</div>
<div id="t130" class="t" style="left:2321.78px;top:1267.6px;font-family:'Liberation Sans', sans-serif;font-size:24.6px;color:#333;font-weight:normal;transform:scaleX(1.0135);transform-origin:0 0;">Saint-Justin</div>
<div id="t131" class="t" style="left:788.52px;top:1321.6px;font-family:'Liberation Sans', sans-serif;font-size:24.6px;color:#333;font-weight:normal;transform:scaleX(0.9382);transform-origin:0 0;">43.933607</div>
<div id="t132" class="t" style="left:1104.01px;top:1321.6px;font-family:'Liberation Sans', sans-serif;font-size:24.6px;color:#333;font-weight:normal;transform:scaleX(0.9382);transform-origin:0 0;">-0.920563</div>
<div id="t133" class="t" style="left:1230.12px;top:1321.6px;font-family:'Liberation Sans', sans-serif;font-size:24.6px;color:#333;font-weight:normal;transform:scaleX(0.8833);transform-origin:0 0;">Garage CARROSSERIE DU MIDI</div>
<div id="t134" class="t" style="left:1722.25px;top:1321.6px;font-family:'Liberation Sans', sans-serif;font-size:24.6px;color:#333;font-weight:normal;transform:scaleX(0.9340);transform-origin:0 0;">POINT(-0.920563 43.933607)</div>
<div id="t135" class="t" style="left:2321.82px;top:1321.6px;font-family:'Liberation Sans', sans-serif;font-size:24.6px;color:#333;font-weight:normal;transform:scaleX(0.9726);transform-origin:0 0;">Rion-des-Landes</div>
<div id="t136" class="t" style="left:775.69px;top:1375.6px;font-family:'Liberation Sans', sans-serif;font-size:24.6px;color:#333;font-weight:normal;transform:scaleX(0.9382);transform-origin:0 0;">43.5572492</div>
<div id="t137" class="t" style="left:1097.92px;top:1375.6px;font-family:'Liberation Sans', sans-serif;font-size:24.6px;color:#333;font-weight:normal;transform:scaleX(0.9382);transform-origin:0 0;">3.7968754</div>
<div id="t138" class="t" style="left:1230.10px;top:1375.6px;font-family:'Liberation Sans', sans-serif;font-size:24.6px;color:#333;font-weight:normal;transform:scaleX(0.9035);transform-origin:0 0;">Garage CAZOULS AUTO DISTRIBUTION</div>
<div id="t139" class="t" style="left:1722.25px;top:1375.6px;font-family:'Liberation Sans', sans-serif;font-size:24.6px;color:#333;font-weight:normal;transform:scaleX(0.9329);transform-origin:0 0;">POINT(3.7968754 43.5572492)</div>
<div id="t140" class="t" style="left:2321.84px;top:1375.6px;font-family:'Liberation Sans', sans-serif;font-size:24.6px;color:#333;font-weight:normal;transform:scaleX(0.9534);transform-origin:0 0;">Fabrègues</div>
<div class="r" style="left:642.0px;top:1410.0px;width:1154.0px;height:14.0px;background:#a4a4a4;border-radius:7px;"></div>
<div class="r" style="left:2546.0px;top:554.0px;width:10.0px;height:29.5px;background:#a8a8a8;border-radius:5px 0 0 5px;"></div>
<div class="r" style="left:2536.0px;top:1403.0px;width:20.0px;height:21.0px;background:#e0e0e0;"></div>
<svg class="r" style="left:0.0px;top:1430.0px;" width="5" height="10" viewBox="0 0 5 10"><path d="M0,0 L0,10 L5,10 Q0.5,8 0,0 Z" fill="#111"/></svg>
</body></html>
